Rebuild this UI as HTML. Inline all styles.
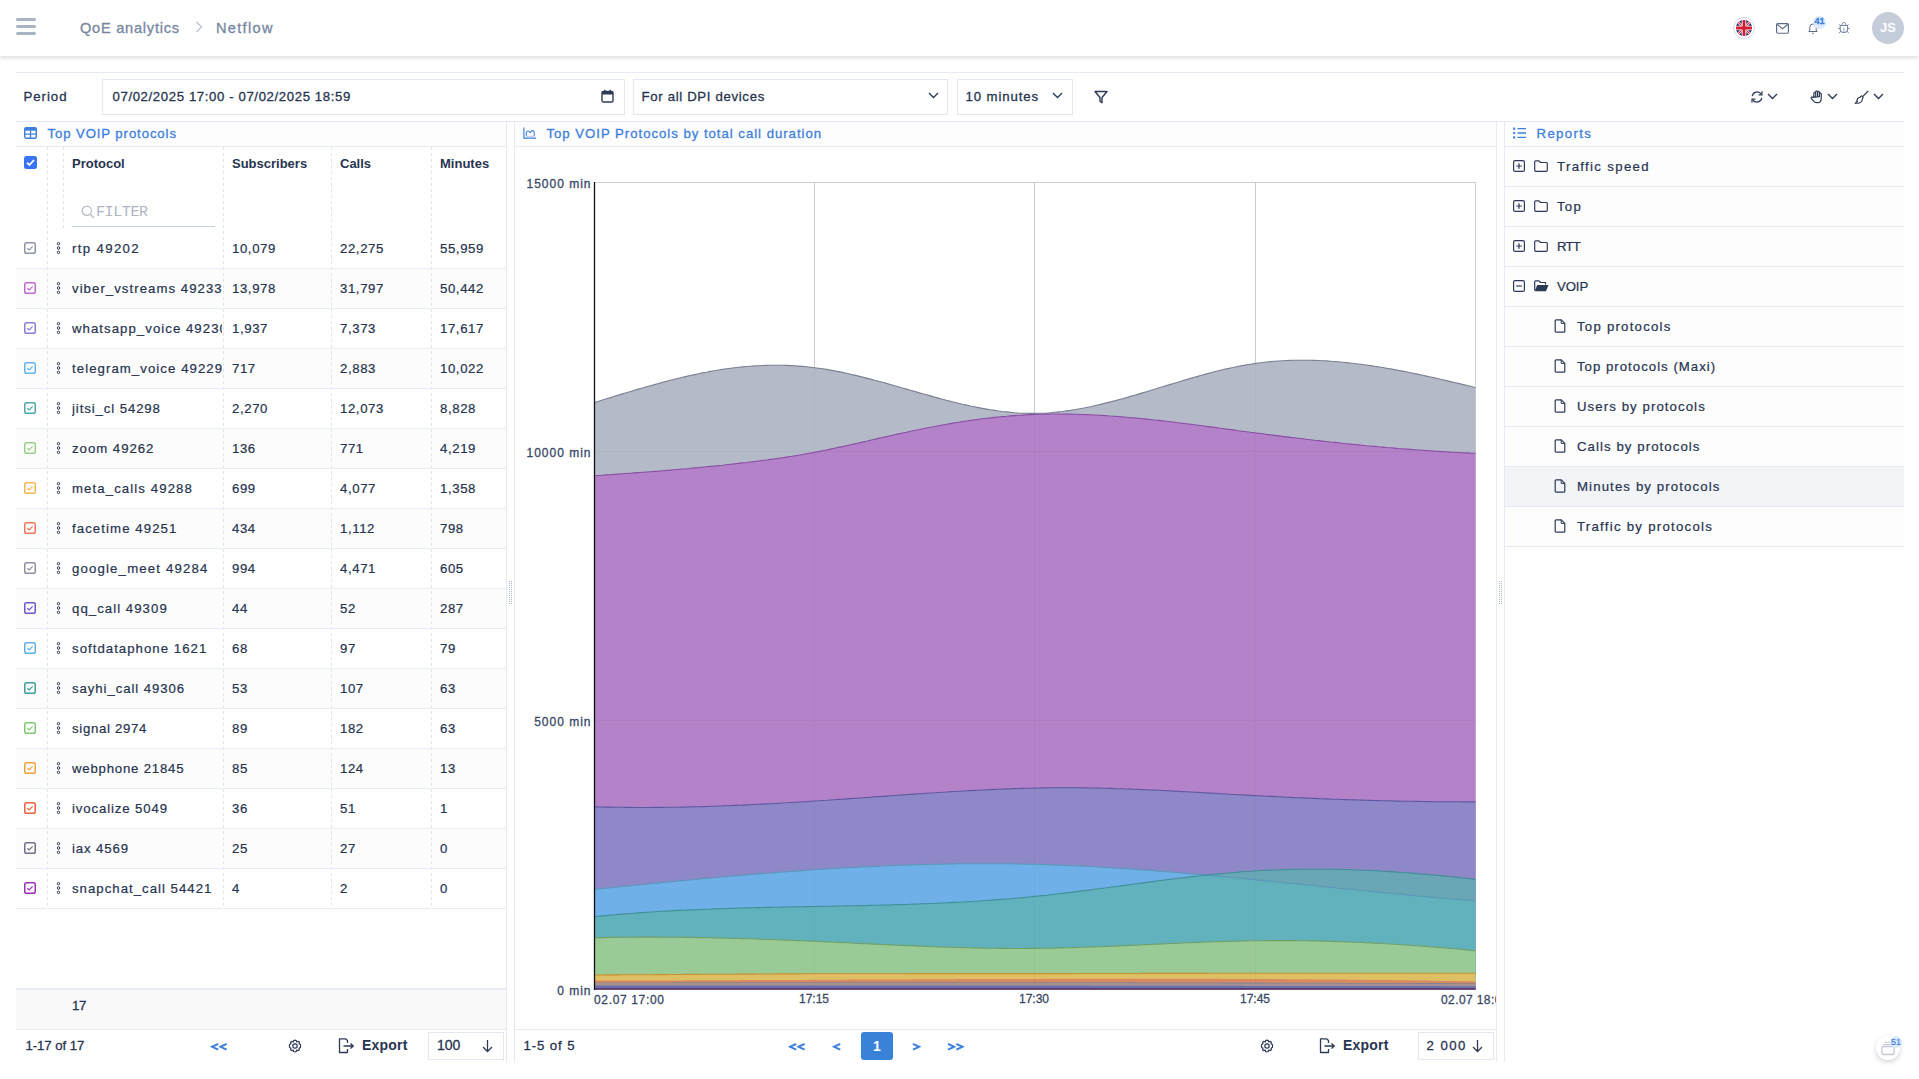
<!DOCTYPE html>
<html><head><meta charset="utf-8">
<style>
*{box-sizing:border-box;margin:0;padding:0}
html,body{width:1919px;height:1079px;overflow:hidden;background:#fff;font-family:"Liberation Sans",sans-serif;color:#27344f}
.a{position:absolute}
.t{position:absolute;white-space:nowrap;line-height:16px;-webkit-text-stroke:0.3px currentColor}
.hl{position:absolute;height:1px;background:#e6ebf3}
.vl{position:absolute;width:1px;background:#e6ebf3}
.dv{position:absolute;z-index:1;width:1px;background:repeating-linear-gradient(to bottom,#dfe5ef 0 3px,transparent 3px 6px)}
svg{position:absolute;overflow:visible}
</style></head><body>
<!-- HEADER -->
<div class="a" style="left:0;top:0;width:1919px;height:56px;background:#fff;box-shadow:0 2px 4px rgba(40,50,70,.16);z-index:2"></div>
<div class="a" style="z-index:3;left:0;top:0;width:1919px;height:56px">
  <div class="a" style="left:16px;top:18px;width:20px;height:2.5px;border-radius:2px;background:#aab3c3"></div>
  <div class="a" style="left:16px;top:25px;width:20px;height:2.5px;border-radius:2px;background:#aab3c3"></div>
  <div class="a" style="left:16px;top:32px;width:20px;height:2.5px;border-radius:2px;background:#aab3c3"></div>
  <div class="t" style="left:80px;top:20px;font-size:14.6px;color:#7886a1;letter-spacing:0.75px">QoE analytics</div>
  <svg style="left:195px;top:21px" width="8" height="12"><path d="M1.5 1 L6.5 6 L1.5 11" fill="none" stroke="#b9c1cf" stroke-width="1.3"/></svg>
  <div class="t" style="left:216px;top:20px;font-size:14.6px;color:#7886a1;letter-spacing:1.3px">Netflow</div>
  <!-- flag -->
  <div class="a" style="left:1733px;top:17px;width:22px;height:22px;border-radius:50%;border:1px solid #d3d9e4;background:#fff"></div>
  <svg style="left:1736px;top:20px" width="16" height="16" viewBox="0 0 16 16">
    <defs><clipPath id="fc"><circle cx="8" cy="8" r="8"/></clipPath></defs>
    <g clip-path="url(#fc)">
      <rect width="16" height="16" fill="#1d2670"/>
      <path d="M0 0L16 16M16 0L0 16" stroke="#fff" stroke-width="2.6"/>
      <path d="M0 0L16 16M16 0L0 16" stroke="#d21c2c" stroke-width="1.2"/>
      <path d="M8 0V16M0 8H16" stroke="#fff" stroke-width="4.6"/>
      <path d="M8 0V16M0 8H16" stroke="#d21c2c" stroke-width="2.8"/>
    </g>
  </svg>
  <!-- mail -->
  <svg style="left:1775.5px;top:22.5px" width="13" height="11" viewBox="0 0 13 11"><rect x="0.6" y="0.6" width="11.8" height="9.6" rx="1.2" fill="none" stroke="#5d6985" stroke-width="1.15"/><path d="M1 1.3L6.5 5.8L12 1.3" fill="none" stroke="#5d6985" stroke-width="1.15"/></svg>
  <!-- bell -->
  <svg style="left:1808px;top:22px" width="10" height="12" viewBox="0 0 10 12"><path d="M1.8 8.5V5.2A3.2 3.2 0 0 1 8.2 5.2V8.5L9.3 9.5H0.7Z" fill="none" stroke="#5d6985" stroke-width="1" stroke-linejoin="round"/><path d="M4.2 11.3H5.8" stroke="#5d6985" stroke-width="1"/></svg>
  <div class="a" style="left:1813px;top:16px;width:13px;height:13px;border-radius:50%;background:#dbeafe"></div>
  <div class="t" style="left:1813px;top:15px;width:13px;text-align:center;font-size:9px;line-height:13px;color:#3b7ddd;font-weight:bold">41</div>
  <!-- bug -->
  <svg style="left:1837px;top:21px" width="14" height="14" viewBox="0 0 14 14"><path d="M4.9 4.3C4.9 2.6 5.8 1.4 6.9 1.4S8.9 2.6 8.9 4.3" fill="none" stroke="#76839f" stroke-width="1"/><path d="M3.2 4.4H10.6V8C10.6 10.2 9 11.5 6.9 11.5S3.2 10.2 3.2 8Z" fill="none" stroke="#76839f" stroke-width="1.05" stroke-linejoin="round"/><path d="M6.9 6.5V11" stroke="#a9b2c4" stroke-width="1.1"/><path d="M1.2 7.6H3.2M10.6 7.6H12.6M2.4 3.4L3.3 4.4M11.4 3.4L10.5 4.4M3.5 10.4L2.1 12.2M10.3 10.4L11.7 12.2" fill="none" stroke="#76839f" stroke-width="1"/></svg>
  <!-- avatar -->
  <div class="a" style="left:1872px;top:12px;width:32px;height:32px;border-radius:50%;background:#c5ccda"></div>
  <div class="t" style="left:1872px;top:20px;width:32px;text-align:center;font-size:13px;font-weight:bold;-webkit-text-stroke:0;color:#fff">JS</div>
</div>
<!-- TOOLBAR -->
<div class="hl" style="left:16px;top:72px;width:1888px"></div>
<div class="hl" style="left:16px;top:121px;width:1888px"></div>
<div class="t" style="left:23.5px;top:88.7px;font-size:13.2px;letter-spacing:0.98px;color:#27344f">Period</div>
<div class="a" style="left:102px;top:79px;width:523px;height:36px;border:1px solid #e3e8f0;background:#fff"></div>
<div class="t" style="left:112.5px;top:88.7px;font-size:13.2px;letter-spacing:0.61px;color:#27344f">07/02/2025 17:00 - 07/02/2025 18:59</div>
<svg style="left:601px;top:89px" width="13" height="14" viewBox="0 0 13 14"><rect x="1" y="2.5" width="11" height="10.5" rx="1.3" fill="none" stroke="#2d3a55" stroke-width="1.4"/><rect x="1" y="2.5" width="11" height="3" fill="#2d3a55"/><path d="M3.8 0.8V3M9.2 0.8V3" stroke="#2d3a55" stroke-width="1.4"/></svg>
<div class="a" style="left:633px;top:79px;width:315px;height:36px;border:1px solid #e3e8f0;background:#fff"></div>
<div class="t" style="left:641.5px;top:88.7px;font-size:13.2px;letter-spacing:0.67px;color:#27344f">For all DPI devices</div>
<svg style="left:928px;top:92px" width="11" height="7" viewBox="0 0 11 7"><path d="M1 1L5.5 5.5L10 1" fill="none" stroke="#2d3a55" stroke-width="1.4"/></svg>
<div class="a" style="left:957px;top:79px;width:116px;height:36px;border:1px solid #e3e8f0;background:#fff"></div>
<div class="t" style="left:965.5px;top:88.7px;font-size:13.2px;letter-spacing:0.89px;color:#27344f">10 minutes</div>
<svg style="left:1052px;top:92px" width="11" height="7" viewBox="0 0 11 7"><path d="M1 1L5.5 5.5L10 1" fill="none" stroke="#2d3a55" stroke-width="1.4"/></svg>
<svg style="left:1094px;top:90px" width="14" height="14" viewBox="0 0 14 14"><path d="M1 1.5H13L8 7.5V12.8L6 11.2V7.5Z" fill="none" stroke="#2d3a55" stroke-width="1.4" stroke-linejoin="round"/></svg>
<!-- right toolbar icons -->
<svg style="left:1750px;top:90px" width="14" height="14" viewBox="0 0 14 14"><path d="M2.2 6.2A5 5 0 0 1 11.3 4.2M11.8 7.8A5 5 0 0 1 2.7 9.8" fill="none" stroke="#2d3a55" stroke-width="1.2"/><path d="M12 1.3V4.8H8.6M2 12.7V9.2H5.4" fill="none" stroke="#2d3a55" stroke-width="1.2"/></svg>
<svg style="left:1767px;top:93px" width="11" height="7" viewBox="0 0 11 7"><path d="M1 1L5.5 5.5L10 1" fill="none" stroke="#2d3a55" stroke-width="1.4"/></svg>
<svg style="left:1809.5px;top:90.3px" width="13.8" height="13.8" viewBox="0 0 15 15"><path d="M4.2 8V3.5A1 1 0 0 1 6.2 3.5V7M6.2 7V2A1 1 0 0 1 8.2 2V7M8.2 7V2.6A1 1 0 0 1 10.2 2.6V7.3M10.2 7.3V4.2A1 1 0 0 1 12.2 4.2V9.5C12.2 12 10.5 13.8 8 13.8H7.2C5.6 13.8 4.6 13 3.6 11.8L1.4 9.2A1 1 0 0 1 3 8Z" fill="none" stroke="#2d3a55" stroke-width="1.3" stroke-linejoin="round"/></svg>
<svg style="left:1827px;top:93px" width="11" height="7" viewBox="0 0 11 7"><path d="M1 1L5.5 5.5L10 1" fill="none" stroke="#2d3a55" stroke-width="1.4"/></svg>
<svg style="left:1854px;top:90px" width="15" height="15" viewBox="0 0 15 15"><path d="M14.2 1L8.6 6.6" stroke="#2d3a55" stroke-width="1.2"/><path d="M7.6 5.8L9.2 7.4L8.6 8.2C8.3 10.8 6.5 13.2 3.5 13.3H1.2L2.6 11.7L3.6 11.8L2.9 10.6C2.9 9 4.3 7.6 6 7.2Z" fill="none" stroke="#2d3a55" stroke-width="1.15" stroke-linejoin="round"/><path d="M1.5 13.2H3.6" stroke="#7d8699" stroke-width="1"/></svg>
<svg style="left:1873px;top:93px" width="11" height="7" viewBox="0 0 11 7"><path d="M1 1L5.5 5.5L10 1" fill="none" stroke="#2d3a55" stroke-width="1.4"/></svg>

<!-- LEFT PANEL -->
<div class="a" style="left:16px;top:122px;width:490px;height:24px;background:#fdfdfe"></div>
<svg style="left:24px;top:127px" width="13" height="12" viewBox="0 0 13 12"><rect x="0.7" y="0.7" width="11.6" height="10.6" rx="1.5" fill="none" stroke="#3f7fdc" stroke-width="1.4"/><rect x="0.7" y="0.7" width="11.6" height="3" fill="#3f7fdc"/><path d="M0.7 7.2H12.3M6.5 3.5V11.3" stroke="#3f7fdc" stroke-width="1.3"/></svg>
<div class="t" style="left:47.5px;top:125.5px;font-size:13.2px;letter-spacing:0.89px;color:#3d7fdb">Top VOIP protocols</div>
<div class="hl" style="left:16px;top:146px;width:490px"></div>
<div class="vl" style="left:506px;top:122px;height:940px"></div>
<!-- header row -->
<div class="a" style="left:24px;top:156px;width:13px;height:13px;border-radius:2.5px;background:#3b73f5"></div>
<svg style="left:24px;top:156px" width="13" height="13" viewBox="0 0 13 13"><path d="M3 6.6L5.4 9L10 4" fill="none" stroke="#fff" stroke-width="1.8"/></svg>
<div class="dv" style="left:47px;top:147px;height:762px"></div>
<div class="dv" style="left:63px;top:147px;height:81px"></div>
<div class="dv" style="left:223px;top:147px;height:762px"></div>
<div class="dv" style="left:331px;top:147px;height:762px"></div>
<div class="dv" style="left:431px;top:147px;height:762px"></div>
<div class="t" style="left:72px;top:156px;font-size:13px;font-weight:bold;-webkit-text-stroke:0;color:#27344f">Protocol</div>
<div class="t" style="left:232px;top:156px;font-size:13px;font-weight:bold;-webkit-text-stroke:0;color:#27344f">Subscribers</div>
<div class="t" style="left:340px;top:156px;font-size:13px;font-weight:bold;-webkit-text-stroke:0;color:#27344f">Calls</div>
<div class="t" style="left:440px;top:156px;font-size:13px;font-weight:bold;-webkit-text-stroke:0;color:#27344f">Minutes</div>
<svg style="left:81px;top:205px" width="14" height="14" viewBox="0 0 14 14"><circle cx="5.8" cy="5.8" r="4.6" fill="none" stroke="#b6bdca" stroke-width="1.3"/><path d="M9.2 9.2L12.8 12.8" stroke="#b6bdca" stroke-width="1.4"/></svg>
<div class="t" style="left:96px;top:205px;font-size:15px;color:#aeb6c3;font-family:'Liberation Mono',monospace;letter-spacing:-0.4px;-webkit-text-stroke:0">FILTER</div>
<div class="a" style="left:72px;top:226px;width:143px;height:1px;background:#c7d2e2"></div>

<div class="a" style="left:16px;top:229px;width:490px;height:40px;background:#fff;border-bottom:1px solid #e8ecf3"></div>
<svg style="left:24px;top:242px" width="12" height="12" viewBox="0 0 12 12"><rect x="0.75" y="0.75" width="10.5" height="10.5" rx="1.8" fill="none" stroke="#8e95a5" stroke-width="1.5"/><path d="M3.3 6.2L5.2 7.9L8.6 4.3" fill="none" stroke="#8e95a5" stroke-width="1.2"/></svg>
<svg style="left:56px;top:242px" width="5" height="12" viewBox="0 0 5 12"><circle cx="2.5" cy="1.7" r="1.2" fill="none" stroke="#2d3a55" stroke-width="1"/><circle cx="2.5" cy="6" r="1.2" fill="none" stroke="#2d3a55" stroke-width="1"/><circle cx="2.5" cy="10.3" r="1.2" fill="none" stroke="#2d3a55" stroke-width="1"/></svg>
<div class="a" style="left:72px;top:241px;width:150px;height:18px;overflow:hidden"><div class="t" style="left:0;top:0;font-size:13.2px;letter-spacing:1.36px;-webkit-text-stroke:0.22px">rtp 49202</div></div>
<div class="t" style="left:232px;top:241px;font-size:13.2px;letter-spacing:0.6px;-webkit-text-stroke:0.22px">10,079</div>
<div class="t" style="left:340px;top:241px;font-size:13.2px;letter-spacing:0.6px;-webkit-text-stroke:0.22px">22,275</div>
<div class="t" style="left:440px;top:241px;font-size:13.2px;letter-spacing:0.6px;-webkit-text-stroke:0.22px">55,959</div>
<div class="a" style="left:16px;top:269px;width:490px;height:40px;background:#fcfcfd;border-bottom:1px solid #e8ecf3"></div>
<svg style="left:24px;top:282px" width="12" height="12" viewBox="0 0 12 12"><rect x="0.75" y="0.75" width="10.5" height="10.5" rx="1.8" fill="none" stroke="#c06ad2" stroke-width="1.5"/><path d="M3.3 6.2L5.2 7.9L8.6 4.3" fill="none" stroke="#c06ad2" stroke-width="1.2"/></svg>
<svg style="left:56px;top:282px" width="5" height="12" viewBox="0 0 5 12"><circle cx="2.5" cy="1.7" r="1.2" fill="none" stroke="#2d3a55" stroke-width="1"/><circle cx="2.5" cy="6" r="1.2" fill="none" stroke="#2d3a55" stroke-width="1"/><circle cx="2.5" cy="10.3" r="1.2" fill="none" stroke="#2d3a55" stroke-width="1"/></svg>
<div class="a" style="left:72px;top:281px;width:150px;height:18px;overflow:hidden"><div class="t" style="left:0;top:0;font-size:13.2px;letter-spacing:1.05px;-webkit-text-stroke:0.22px">viber_vstreams 49233</div></div>
<div class="t" style="left:232px;top:281px;font-size:13.2px;letter-spacing:0.6px;-webkit-text-stroke:0.22px">13,978</div>
<div class="t" style="left:340px;top:281px;font-size:13.2px;letter-spacing:0.6px;-webkit-text-stroke:0.22px">31,797</div>
<div class="t" style="left:440px;top:281px;font-size:13.2px;letter-spacing:0.6px;-webkit-text-stroke:0.22px">50,442</div>
<div class="a" style="left:16px;top:309px;width:490px;height:40px;background:#fff;border-bottom:1px solid #e8ecf3"></div>
<svg style="left:24px;top:322px" width="12" height="12" viewBox="0 0 12 12"><rect x="0.75" y="0.75" width="10.5" height="10.5" rx="1.8" fill="none" stroke="#8a7fd6" stroke-width="1.5"/><path d="M3.3 6.2L5.2 7.9L8.6 4.3" fill="none" stroke="#8a7fd6" stroke-width="1.2"/></svg>
<svg style="left:56px;top:322px" width="5" height="12" viewBox="0 0 5 12"><circle cx="2.5" cy="1.7" r="1.2" fill="none" stroke="#2d3a55" stroke-width="1"/><circle cx="2.5" cy="6" r="1.2" fill="none" stroke="#2d3a55" stroke-width="1"/><circle cx="2.5" cy="10.3" r="1.2" fill="none" stroke="#2d3a55" stroke-width="1"/></svg>
<div class="a" style="left:72px;top:321px;width:150px;height:18px;overflow:hidden"><div class="t" style="left:0;top:0;font-size:13.2px;letter-spacing:1.05px;-webkit-text-stroke:0.22px">whatsapp_voice 49230</div></div>
<div class="t" style="left:232px;top:321px;font-size:13.2px;letter-spacing:0.6px;-webkit-text-stroke:0.22px">1,937</div>
<div class="t" style="left:340px;top:321px;font-size:13.2px;letter-spacing:0.6px;-webkit-text-stroke:0.22px">7,373</div>
<div class="t" style="left:440px;top:321px;font-size:13.2px;letter-spacing:0.6px;-webkit-text-stroke:0.22px">17,617</div>
<div class="a" style="left:16px;top:349px;width:490px;height:40px;background:#fcfcfd;border-bottom:1px solid #e8ecf3"></div>
<svg style="left:24px;top:362px" width="12" height="12" viewBox="0 0 12 12"><rect x="0.75" y="0.75" width="10.5" height="10.5" rx="1.8" fill="none" stroke="#62b4f0" stroke-width="1.5"/><path d="M3.3 6.2L5.2 7.9L8.6 4.3" fill="none" stroke="#62b4f0" stroke-width="1.2"/></svg>
<svg style="left:56px;top:362px" width="5" height="12" viewBox="0 0 5 12"><circle cx="2.5" cy="1.7" r="1.2" fill="none" stroke="#2d3a55" stroke-width="1"/><circle cx="2.5" cy="6" r="1.2" fill="none" stroke="#2d3a55" stroke-width="1"/><circle cx="2.5" cy="10.3" r="1.2" fill="none" stroke="#2d3a55" stroke-width="1"/></svg>
<div class="a" style="left:72px;top:361px;width:150px;height:18px;overflow:hidden"><div class="t" style="left:0;top:0;font-size:13.2px;letter-spacing:1.07px;-webkit-text-stroke:0.22px">telegram_voice 49229</div></div>
<div class="t" style="left:232px;top:361px;font-size:13.2px;letter-spacing:0.6px;-webkit-text-stroke:0.22px">717</div>
<div class="t" style="left:340px;top:361px;font-size:13.2px;letter-spacing:0.6px;-webkit-text-stroke:0.22px">2,883</div>
<div class="t" style="left:440px;top:361px;font-size:13.2px;letter-spacing:0.6px;-webkit-text-stroke:0.22px">10,022</div>
<div class="a" style="left:16px;top:389px;width:490px;height:40px;background:#fff;border-bottom:1px solid #e8ecf3"></div>
<svg style="left:24px;top:402px" width="12" height="12" viewBox="0 0 12 12"><rect x="0.75" y="0.75" width="10.5" height="10.5" rx="1.8" fill="none" stroke="#4fa9a6" stroke-width="1.5"/><path d="M3.3 6.2L5.2 7.9L8.6 4.3" fill="none" stroke="#4fa9a6" stroke-width="1.2"/></svg>
<svg style="left:56px;top:402px" width="5" height="12" viewBox="0 0 5 12"><circle cx="2.5" cy="1.7" r="1.2" fill="none" stroke="#2d3a55" stroke-width="1"/><circle cx="2.5" cy="6" r="1.2" fill="none" stroke="#2d3a55" stroke-width="1"/><circle cx="2.5" cy="10.3" r="1.2" fill="none" stroke="#2d3a55" stroke-width="1"/></svg>
<div class="a" style="left:72px;top:401px;width:150px;height:18px;overflow:hidden"><div class="t" style="left:0;top:0;font-size:13.2px;letter-spacing:0.9px;-webkit-text-stroke:0.22px">jitsi_cl 54298</div></div>
<div class="t" style="left:232px;top:401px;font-size:13.2px;letter-spacing:0.6px;-webkit-text-stroke:0.22px">2,270</div>
<div class="t" style="left:340px;top:401px;font-size:13.2px;letter-spacing:0.6px;-webkit-text-stroke:0.22px">12,073</div>
<div class="t" style="left:440px;top:401px;font-size:13.2px;letter-spacing:0.6px;-webkit-text-stroke:0.22px">8,828</div>
<div class="a" style="left:16px;top:429px;width:490px;height:40px;background:#fcfcfd;border-bottom:1px solid #e8ecf3"></div>
<svg style="left:24px;top:442px" width="12" height="12" viewBox="0 0 12 12"><rect x="0.75" y="0.75" width="10.5" height="10.5" rx="1.8" fill="none" stroke="#98d08a" stroke-width="1.5"/><path d="M3.3 6.2L5.2 7.9L8.6 4.3" fill="none" stroke="#98d08a" stroke-width="1.2"/></svg>
<svg style="left:56px;top:442px" width="5" height="12" viewBox="0 0 5 12"><circle cx="2.5" cy="1.7" r="1.2" fill="none" stroke="#2d3a55" stroke-width="1"/><circle cx="2.5" cy="6" r="1.2" fill="none" stroke="#2d3a55" stroke-width="1"/><circle cx="2.5" cy="10.3" r="1.2" fill="none" stroke="#2d3a55" stroke-width="1"/></svg>
<div class="a" style="left:72px;top:441px;width:150px;height:18px;overflow:hidden"><div class="t" style="left:0;top:0;font-size:13.2px;letter-spacing:0.98px;-webkit-text-stroke:0.22px">zoom 49262</div></div>
<div class="t" style="left:232px;top:441px;font-size:13.2px;letter-spacing:0.6px;-webkit-text-stroke:0.22px">136</div>
<div class="t" style="left:340px;top:441px;font-size:13.2px;letter-spacing:0.6px;-webkit-text-stroke:0.22px">771</div>
<div class="t" style="left:440px;top:441px;font-size:13.2px;letter-spacing:0.6px;-webkit-text-stroke:0.22px">4,219</div>
<div class="a" style="left:16px;top:469px;width:490px;height:40px;background:#fff;border-bottom:1px solid #e8ecf3"></div>
<svg style="left:24px;top:482px" width="12" height="12" viewBox="0 0 12 12"><rect x="0.75" y="0.75" width="10.5" height="10.5" rx="1.8" fill="none" stroke="#f5b654" stroke-width="1.5"/><path d="M3.3 6.2L5.2 7.9L8.6 4.3" fill="none" stroke="#f5b654" stroke-width="1.2"/></svg>
<svg style="left:56px;top:482px" width="5" height="12" viewBox="0 0 5 12"><circle cx="2.5" cy="1.7" r="1.2" fill="none" stroke="#2d3a55" stroke-width="1"/><circle cx="2.5" cy="6" r="1.2" fill="none" stroke="#2d3a55" stroke-width="1"/><circle cx="2.5" cy="10.3" r="1.2" fill="none" stroke="#2d3a55" stroke-width="1"/></svg>
<div class="a" style="left:72px;top:481px;width:150px;height:18px;overflow:hidden"><div class="t" style="left:0;top:0;font-size:13.2px;letter-spacing:1.1px;-webkit-text-stroke:0.22px">meta_calls 49288</div></div>
<div class="t" style="left:232px;top:481px;font-size:13.2px;letter-spacing:0.6px;-webkit-text-stroke:0.22px">699</div>
<div class="t" style="left:340px;top:481px;font-size:13.2px;letter-spacing:0.6px;-webkit-text-stroke:0.22px">4,077</div>
<div class="t" style="left:440px;top:481px;font-size:13.2px;letter-spacing:0.6px;-webkit-text-stroke:0.22px">1,358</div>
<div class="a" style="left:16px;top:509px;width:490px;height:40px;background:#fcfcfd;border-bottom:1px solid #e8ecf3"></div>
<svg style="left:24px;top:522px" width="12" height="12" viewBox="0 0 12 12"><rect x="0.75" y="0.75" width="10.5" height="10.5" rx="1.8" fill="none" stroke="#f27757" stroke-width="1.5"/><path d="M3.3 6.2L5.2 7.9L8.6 4.3" fill="none" stroke="#f27757" stroke-width="1.2"/></svg>
<svg style="left:56px;top:522px" width="5" height="12" viewBox="0 0 5 12"><circle cx="2.5" cy="1.7" r="1.2" fill="none" stroke="#2d3a55" stroke-width="1"/><circle cx="2.5" cy="6" r="1.2" fill="none" stroke="#2d3a55" stroke-width="1"/><circle cx="2.5" cy="10.3" r="1.2" fill="none" stroke="#2d3a55" stroke-width="1"/></svg>
<div class="a" style="left:72px;top:521px;width:150px;height:18px;overflow:hidden"><div class="t" style="left:0;top:0;font-size:13.2px;letter-spacing:1.09px;-webkit-text-stroke:0.22px">facetime 49251</div></div>
<div class="t" style="left:232px;top:521px;font-size:13.2px;letter-spacing:0.6px;-webkit-text-stroke:0.22px">434</div>
<div class="t" style="left:340px;top:521px;font-size:13.2px;letter-spacing:0.6px;-webkit-text-stroke:0.22px">1,112</div>
<div class="t" style="left:440px;top:521px;font-size:13.2px;letter-spacing:0.6px;-webkit-text-stroke:0.22px">798</div>
<div class="a" style="left:16px;top:549px;width:490px;height:40px;background:#fff;border-bottom:1px solid #e8ecf3"></div>
<svg style="left:24px;top:562px" width="12" height="12" viewBox="0 0 12 12"><rect x="0.75" y="0.75" width="10.5" height="10.5" rx="1.8" fill="none" stroke="#8b91a0" stroke-width="1.5"/><path d="M3.3 6.2L5.2 7.9L8.6 4.3" fill="none" stroke="#8b91a0" stroke-width="1.2"/></svg>
<svg style="left:56px;top:562px" width="5" height="12" viewBox="0 0 5 12"><circle cx="2.5" cy="1.7" r="1.2" fill="none" stroke="#2d3a55" stroke-width="1"/><circle cx="2.5" cy="6" r="1.2" fill="none" stroke="#2d3a55" stroke-width="1"/><circle cx="2.5" cy="10.3" r="1.2" fill="none" stroke="#2d3a55" stroke-width="1"/></svg>
<div class="a" style="left:72px;top:561px;width:150px;height:18px;overflow:hidden"><div class="t" style="left:0;top:0;font-size:13.2px;letter-spacing:1.17px;-webkit-text-stroke:0.22px">google_meet 49284</div></div>
<div class="t" style="left:232px;top:561px;font-size:13.2px;letter-spacing:0.6px;-webkit-text-stroke:0.22px">994</div>
<div class="t" style="left:340px;top:561px;font-size:13.2px;letter-spacing:0.6px;-webkit-text-stroke:0.22px">4,471</div>
<div class="t" style="left:440px;top:561px;font-size:13.2px;letter-spacing:0.6px;-webkit-text-stroke:0.22px">605</div>
<div class="a" style="left:16px;top:589px;width:490px;height:40px;background:#fcfcfd;border-bottom:1px solid #e8ecf3"></div>
<svg style="left:24px;top:602px" width="12" height="12" viewBox="0 0 12 12"><rect x="0.75" y="0.75" width="10.5" height="10.5" rx="1.8" fill="none" stroke="#6f58c9" stroke-width="1.5"/><path d="M3.3 6.2L5.2 7.9L8.6 4.3" fill="none" stroke="#6f58c9" stroke-width="1.2"/></svg>
<svg style="left:56px;top:602px" width="5" height="12" viewBox="0 0 5 12"><circle cx="2.5" cy="1.7" r="1.2" fill="none" stroke="#2d3a55" stroke-width="1"/><circle cx="2.5" cy="6" r="1.2" fill="none" stroke="#2d3a55" stroke-width="1"/><circle cx="2.5" cy="10.3" r="1.2" fill="none" stroke="#2d3a55" stroke-width="1"/></svg>
<div class="a" style="left:72px;top:601px;width:150px;height:18px;overflow:hidden"><div class="t" style="left:0;top:0;font-size:13.2px;letter-spacing:1.05px;-webkit-text-stroke:0.22px">qq_call 49309</div></div>
<div class="t" style="left:232px;top:601px;font-size:13.2px;letter-spacing:0.6px;-webkit-text-stroke:0.22px">44</div>
<div class="t" style="left:340px;top:601px;font-size:13.2px;letter-spacing:0.6px;-webkit-text-stroke:0.22px">52</div>
<div class="t" style="left:440px;top:601px;font-size:13.2px;letter-spacing:0.6px;-webkit-text-stroke:0.22px">287</div>
<div class="a" style="left:16px;top:629px;width:490px;height:40px;background:#fff;border-bottom:1px solid #e8ecf3"></div>
<svg style="left:24px;top:642px" width="12" height="12" viewBox="0 0 12 12"><rect x="0.75" y="0.75" width="10.5" height="10.5" rx="1.8" fill="none" stroke="#5fb0e6" stroke-width="1.5"/><path d="M3.3 6.2L5.2 7.9L8.6 4.3" fill="none" stroke="#5fb0e6" stroke-width="1.2"/></svg>
<svg style="left:56px;top:642px" width="5" height="12" viewBox="0 0 5 12"><circle cx="2.5" cy="1.7" r="1.2" fill="none" stroke="#2d3a55" stroke-width="1"/><circle cx="2.5" cy="6" r="1.2" fill="none" stroke="#2d3a55" stroke-width="1"/><circle cx="2.5" cy="10.3" r="1.2" fill="none" stroke="#2d3a55" stroke-width="1"/></svg>
<div class="a" style="left:72px;top:641px;width:150px;height:18px;overflow:hidden"><div class="t" style="left:0;top:0;font-size:13.2px;letter-spacing:1.04px;-webkit-text-stroke:0.22px">softdataphone 1621</div></div>
<div class="t" style="left:232px;top:641px;font-size:13.2px;letter-spacing:0.6px;-webkit-text-stroke:0.22px">68</div>
<div class="t" style="left:340px;top:641px;font-size:13.2px;letter-spacing:0.6px;-webkit-text-stroke:0.22px">97</div>
<div class="t" style="left:440px;top:641px;font-size:13.2px;letter-spacing:0.6px;-webkit-text-stroke:0.22px">79</div>
<div class="a" style="left:16px;top:669px;width:490px;height:40px;background:#fcfcfd;border-bottom:1px solid #e8ecf3"></div>
<svg style="left:24px;top:682px" width="12" height="12" viewBox="0 0 12 12"><rect x="0.75" y="0.75" width="10.5" height="10.5" rx="1.8" fill="none" stroke="#3e9e99" stroke-width="1.5"/><path d="M3.3 6.2L5.2 7.9L8.6 4.3" fill="none" stroke="#3e9e99" stroke-width="1.2"/></svg>
<svg style="left:56px;top:682px" width="5" height="12" viewBox="0 0 5 12"><circle cx="2.5" cy="1.7" r="1.2" fill="none" stroke="#2d3a55" stroke-width="1"/><circle cx="2.5" cy="6" r="1.2" fill="none" stroke="#2d3a55" stroke-width="1"/><circle cx="2.5" cy="10.3" r="1.2" fill="none" stroke="#2d3a55" stroke-width="1"/></svg>
<div class="a" style="left:72px;top:681px;width:150px;height:18px;overflow:hidden"><div class="t" style="left:0;top:0;font-size:13.2px;letter-spacing:0.93px;-webkit-text-stroke:0.22px">sayhi_call 49306</div></div>
<div class="t" style="left:232px;top:681px;font-size:13.2px;letter-spacing:0.6px;-webkit-text-stroke:0.22px">53</div>
<div class="t" style="left:340px;top:681px;font-size:13.2px;letter-spacing:0.6px;-webkit-text-stroke:0.22px">107</div>
<div class="t" style="left:440px;top:681px;font-size:13.2px;letter-spacing:0.6px;-webkit-text-stroke:0.22px">63</div>
<div class="a" style="left:16px;top:709px;width:490px;height:40px;background:#fff;border-bottom:1px solid #e8ecf3"></div>
<svg style="left:24px;top:722px" width="12" height="12" viewBox="0 0 12 12"><rect x="0.75" y="0.75" width="10.5" height="10.5" rx="1.8" fill="none" stroke="#7fc874" stroke-width="1.5"/><path d="M3.3 6.2L5.2 7.9L8.6 4.3" fill="none" stroke="#7fc874" stroke-width="1.2"/></svg>
<svg style="left:56px;top:722px" width="5" height="12" viewBox="0 0 5 12"><circle cx="2.5" cy="1.7" r="1.2" fill="none" stroke="#2d3a55" stroke-width="1"/><circle cx="2.5" cy="6" r="1.2" fill="none" stroke="#2d3a55" stroke-width="1"/><circle cx="2.5" cy="10.3" r="1.2" fill="none" stroke="#2d3a55" stroke-width="1"/></svg>
<div class="a" style="left:72px;top:721px;width:150px;height:18px;overflow:hidden"><div class="t" style="left:0;top:0;font-size:13.2px;letter-spacing:0.69px;-webkit-text-stroke:0.22px">signal 2974</div></div>
<div class="t" style="left:232px;top:721px;font-size:13.2px;letter-spacing:0.6px;-webkit-text-stroke:0.22px">89</div>
<div class="t" style="left:340px;top:721px;font-size:13.2px;letter-spacing:0.6px;-webkit-text-stroke:0.22px">182</div>
<div class="t" style="left:440px;top:721px;font-size:13.2px;letter-spacing:0.6px;-webkit-text-stroke:0.22px">63</div>
<div class="a" style="left:16px;top:749px;width:490px;height:40px;background:#fcfcfd;border-bottom:1px solid #e8ecf3"></div>
<svg style="left:24px;top:762px" width="12" height="12" viewBox="0 0 12 12"><rect x="0.75" y="0.75" width="10.5" height="10.5" rx="1.8" fill="none" stroke="#f2a23c" stroke-width="1.5"/><path d="M3.3 6.2L5.2 7.9L8.6 4.3" fill="none" stroke="#f2a23c" stroke-width="1.2"/></svg>
<svg style="left:56px;top:762px" width="5" height="12" viewBox="0 0 5 12"><circle cx="2.5" cy="1.7" r="1.2" fill="none" stroke="#2d3a55" stroke-width="1"/><circle cx="2.5" cy="6" r="1.2" fill="none" stroke="#2d3a55" stroke-width="1"/><circle cx="2.5" cy="10.3" r="1.2" fill="none" stroke="#2d3a55" stroke-width="1"/></svg>
<div class="a" style="left:72px;top:761px;width:150px;height:18px;overflow:hidden"><div class="t" style="left:0;top:0;font-size:13.2px;letter-spacing:0.79px;-webkit-text-stroke:0.22px">webphone 21845</div></div>
<div class="t" style="left:232px;top:761px;font-size:13.2px;letter-spacing:0.6px;-webkit-text-stroke:0.22px">85</div>
<div class="t" style="left:340px;top:761px;font-size:13.2px;letter-spacing:0.6px;-webkit-text-stroke:0.22px">124</div>
<div class="t" style="left:440px;top:761px;font-size:13.2px;letter-spacing:0.6px;-webkit-text-stroke:0.22px">13</div>
<div class="a" style="left:16px;top:789px;width:490px;height:40px;background:#fff;border-bottom:1px solid #e8ecf3"></div>
<svg style="left:24px;top:802px" width="12" height="12" viewBox="0 0 12 12"><rect x="0.75" y="0.75" width="10.5" height="10.5" rx="1.8" fill="none" stroke="#ee6040" stroke-width="1.5"/><path d="M3.3 6.2L5.2 7.9L8.6 4.3" fill="none" stroke="#ee6040" stroke-width="1.2"/></svg>
<svg style="left:56px;top:802px" width="5" height="12" viewBox="0 0 5 12"><circle cx="2.5" cy="1.7" r="1.2" fill="none" stroke="#2d3a55" stroke-width="1"/><circle cx="2.5" cy="6" r="1.2" fill="none" stroke="#2d3a55" stroke-width="1"/><circle cx="2.5" cy="10.3" r="1.2" fill="none" stroke="#2d3a55" stroke-width="1"/></svg>
<div class="a" style="left:72px;top:801px;width:150px;height:18px;overflow:hidden"><div class="t" style="left:0;top:0;font-size:13.2px;letter-spacing:0.88px;-webkit-text-stroke:0.22px">ivocalize 5049</div></div>
<div class="t" style="left:232px;top:801px;font-size:13.2px;letter-spacing:0.6px;-webkit-text-stroke:0.22px">36</div>
<div class="t" style="left:340px;top:801px;font-size:13.2px;letter-spacing:0.6px;-webkit-text-stroke:0.22px">51</div>
<div class="t" style="left:440px;top:801px;font-size:13.2px;letter-spacing:0.6px;-webkit-text-stroke:0.22px">1</div>
<div class="a" style="left:16px;top:829px;width:490px;height:40px;background:#fcfcfd;border-bottom:1px solid #e8ecf3"></div>
<svg style="left:24px;top:842px" width="12" height="12" viewBox="0 0 12 12"><rect x="0.75" y="0.75" width="10.5" height="10.5" rx="1.8" fill="none" stroke="#6c7385" stroke-width="1.5"/><path d="M3.3 6.2L5.2 7.9L8.6 4.3" fill="none" stroke="#6c7385" stroke-width="1.2"/></svg>
<svg style="left:56px;top:842px" width="5" height="12" viewBox="0 0 5 12"><circle cx="2.5" cy="1.7" r="1.2" fill="none" stroke="#2d3a55" stroke-width="1"/><circle cx="2.5" cy="6" r="1.2" fill="none" stroke="#2d3a55" stroke-width="1"/><circle cx="2.5" cy="10.3" r="1.2" fill="none" stroke="#2d3a55" stroke-width="1"/></svg>
<div class="a" style="left:72px;top:841px;width:150px;height:18px;overflow:hidden"><div class="t" style="left:0;top:0;font-size:13.2px;letter-spacing:0.9px;-webkit-text-stroke:0.22px">iax 4569</div></div>
<div class="t" style="left:232px;top:841px;font-size:13.2px;letter-spacing:0.6px;-webkit-text-stroke:0.22px">25</div>
<div class="t" style="left:340px;top:841px;font-size:13.2px;letter-spacing:0.6px;-webkit-text-stroke:0.22px">27</div>
<div class="t" style="left:440px;top:841px;font-size:13.2px;letter-spacing:0.6px;-webkit-text-stroke:0.22px">0</div>
<div class="a" style="left:16px;top:869px;width:490px;height:40px;background:#fff;border-bottom:1px solid #e8ecf3"></div>
<svg style="left:24px;top:882px" width="12" height="12" viewBox="0 0 12 12"><rect x="0.75" y="0.75" width="10.5" height="10.5" rx="1.8" fill="none" stroke="#9b30b3" stroke-width="1.5"/><path d="M3.3 6.2L5.2 7.9L8.6 4.3" fill="none" stroke="#9b30b3" stroke-width="1.2"/></svg>
<svg style="left:56px;top:882px" width="5" height="12" viewBox="0 0 5 12"><circle cx="2.5" cy="1.7" r="1.2" fill="none" stroke="#2d3a55" stroke-width="1"/><circle cx="2.5" cy="6" r="1.2" fill="none" stroke="#2d3a55" stroke-width="1"/><circle cx="2.5" cy="10.3" r="1.2" fill="none" stroke="#2d3a55" stroke-width="1"/></svg>
<div class="a" style="left:72px;top:881px;width:150px;height:18px;overflow:hidden"><div class="t" style="left:0;top:0;font-size:13.2px;letter-spacing:1.02px;-webkit-text-stroke:0.22px">snapchat_call 54421</div></div>
<div class="t" style="left:232px;top:881px;font-size:13.2px;letter-spacing:0.6px;-webkit-text-stroke:0.22px">4</div>
<div class="t" style="left:340px;top:881px;font-size:13.2px;letter-spacing:0.6px;-webkit-text-stroke:0.22px">2</div>
<div class="t" style="left:440px;top:881px;font-size:13.2px;letter-spacing:0.6px;-webkit-text-stroke:0.22px">0</div>
<!-- footer -->
<div class="a" style="left:16px;top:988px;width:490px;height:42px;background:#f9f9fa;border-top:2px solid #e8edf5;border-bottom:1px solid #e6ebf3"></div>
<div class="t" style="left:72px;top:998px;font-size:13.2px;letter-spacing:-0.3px">17</div>
<div class="t" style="left:25.5px;top:1037.5px;font-size:13.2px;letter-spacing:-0.07px">1-17 of 17</div>
<svg style="left:210.5px;top:1043.3px" width="16.6" height="7.8"><path d="M7.2 0.9L1.1 3.8L7.2 6.7 M15.6 0.9L9.5 3.8L15.6 6.7" fill="none" stroke="#3d7fdb" stroke-width="2" stroke-linejoin="miter"/></svg>
<svg style="left:288px;top:1039px" width="14" height="14" viewBox="0 0 14 14"><path d="M7 1.2L8.3 1.5L8.8 3L10.3 2.4L11.4 3.3L11 4.8L12.4 5.6L12.6 7L12.4 8.4L11 9.2L11.4 10.7L10.3 11.6L8.8 11L8.3 12.5L7 12.8L5.7 12.5L5.2 11L3.7 11.6L2.6 10.7L3 9.2L1.6 8.4L1.4 7L1.6 5.6L3 4.8L2.6 3.3L3.7 2.4L5.2 3L5.7 1.5Z" fill="none" stroke="#2d3a55" stroke-width="1.2" stroke-linejoin="round"/><circle cx="7" cy="7" r="2.2" fill="none" stroke="#2d3a55" stroke-width="1.2"/></svg>
<svg style="left:338px;top:1038px" width="17" height="16" viewBox="0 0 17 16"><path d="M9.5 5V2.5L7.5 0.8H1.5V14.5H9.5V11" fill="none" stroke="#2d3a55" stroke-width="1.3" stroke-linejoin="round"/><path d="M5.5 8H15M12.5 5.5L15.2 8L12.5 10.5" fill="none" stroke="#2d3a55" stroke-width="1.3"/></svg>
<div class="t" style="left:362px;top:1037px;font-size:14px;font-weight:bold;-webkit-text-stroke:0;letter-spacing:0.2px">Export</div>
<div class="a" style="left:428px;top:1032px;width:76px;height:28px;border:1px solid #e3e8f0"></div>
<div class="t" style="left:437px;top:1037px;font-size:14px">100</div>
<svg style="left:482px;top:1039px" width="11" height="14" viewBox="0 0 11 14"><path d="M5.5 1V12.5M1 8L5.5 12.5L10 8" fill="none" stroke="#2d3a55" stroke-width="1.3"/></svg>

<!-- MIDDLE PANEL -->
<div class="vl" style="left:514px;top:122px;height:940px"></div>
<div class="vl" style="left:1496px;top:122px;height:940px"></div>
<div class="a" style="left:516px;top:122px;width:980px;height:24px;background:#fdfdfe"></div>
<div class="hl" style="left:515px;top:146px;width:981px"></div>
<svg style="left:523px;top:127px" width="14" height="12" viewBox="0 0 14 12"><path d="M0.9 0.5V11.2H13" fill="none" stroke="#3f7fdc" stroke-width="1.2"/><path d="M3.3 9.2V6.2C3.3 4.6 4.6 3.6 5.8 4.4L7.2 5.5L9 3.8C10.3 3.2 11.2 4.3 11.2 5.8V9.2" fill="none" stroke="#3f7fdc" stroke-width="1.1"/><rect x="3" y="8.6" width="8.6" height="1.4" fill="#c9d4ee"/></svg>
<div class="t" style="left:546.5px;top:125.5px;font-size:13.2px;letter-spacing:0.97px;color:#3d7fdb">Top VOIP Protocols by total call duration</div>
<!--CHART--><svg style="left:0;top:0;z-index:0" width="1919" height="1079" viewBox="0 0 1919 1079"><line x1="595" y1="182.5" x2="1476" y2="182.5" stroke="#d0d0d0" stroke-width="1"/><line x1="595" y1="451.5" x2="1476" y2="451.5" stroke="#d0d0d0" stroke-width="1"/><line x1="595" y1="720.5" x2="1476" y2="720.5" stroke="#d0d0d0" stroke-width="1"/><line x1="814.5" y1="182" x2="814.5" y2="989.6" stroke="#d0d0d0" stroke-width="1"/><line x1="1034.5" y1="182" x2="1034.5" y2="989.6" stroke="#d0d0d0" stroke-width="1"/><line x1="1255.5" y1="182" x2="1255.5" y2="989.6" stroke="#d0d0d0" stroke-width="1"/><line x1="1475.5" y1="182" x2="1475.5" y2="989.6" stroke="#d0d0d0" stroke-width="1"/><path d="M594.5,989.6 L594.5,402.5 598.5,401.3 602.5,400.0 606.5,398.8 610.5,397.6 614.5,396.3 618.5,395.1 622.5,393.9 626.5,392.7 630.5,391.5 634.5,390.3 638.5,389.1 642.5,388.0 646.5,386.8 650.5,385.7 654.5,384.6 658.5,383.5 662.5,382.4 666.5,381.3 670.5,380.3 674.5,379.3 678.5,378.3 682.5,377.3 686.5,376.4 690.5,375.5 694.5,374.6 698.5,373.8 702.5,372.9 706.5,372.2 710.5,371.4 714.5,370.7 718.5,370.0 722.5,369.4 726.5,368.8 730.5,368.3 734.5,367.8 738.5,367.3 742.5,366.9 746.5,366.5 750.5,366.2 754.5,365.9 758.5,365.7 762.5,365.5 766.5,365.4 770.5,365.3 774.5,365.2 778.5,365.3 782.5,365.3 786.5,365.4 790.5,365.6 794.5,365.8 798.5,366.1 802.5,366.4 806.5,366.8 810.5,367.2 814.5,367.7 818.5,368.2 822.5,368.8 826.5,369.4 830.5,370.1 834.5,370.9 838.5,371.6 842.5,372.4 846.5,373.3 850.5,374.2 854.5,375.1 858.5,376.1 862.5,377.1 866.5,378.1 870.5,379.1 874.5,380.2 878.5,381.2 882.5,382.3 886.5,383.4 890.5,384.6 894.5,385.7 898.5,386.8 902.5,388.0 906.5,389.1 910.5,390.3 914.5,391.4 918.5,392.6 922.5,393.7 926.5,394.8 930.5,395.9 934.5,397.1 938.5,398.1 942.5,399.2 946.5,400.3 950.5,401.3 954.5,402.3 958.5,403.3 962.5,404.2 966.5,405.1 970.5,406.0 974.5,406.8 978.5,407.6 982.5,408.4 986.5,409.1 990.5,409.8 994.5,410.4 998.5,411.0 1002.5,411.5 1006.5,411.9 1010.5,412.3 1014.5,412.7 1018.5,413.0 1022.5,413.2 1026.5,413.3 1030.5,413.4 1034.5,413.4 1038.5,413.3 1042.5,413.2 1046.5,413.0 1050.5,412.7 1054.5,412.3 1058.5,411.9 1062.5,411.5 1066.5,410.9 1070.5,410.4 1074.5,409.7 1078.5,409.0 1082.5,408.3 1086.5,407.5 1090.5,406.7 1094.5,405.8 1098.5,404.9 1102.5,403.9 1106.5,402.9 1110.5,401.9 1114.5,400.9 1118.5,399.8 1122.5,398.7 1126.5,397.6 1130.5,396.4 1134.5,395.3 1138.5,394.1 1142.5,392.9 1146.5,391.7 1150.5,390.5 1154.5,389.3 1158.5,388.0 1162.5,386.8 1166.5,385.6 1170.5,384.4 1174.5,383.2 1178.5,382.0 1182.5,380.8 1186.5,379.6 1190.5,378.4 1194.5,377.2 1198.5,376.1 1202.5,375.0 1206.5,373.9 1210.5,372.8 1214.5,371.8 1218.5,370.8 1222.5,369.8 1226.5,368.9 1230.5,368.0 1234.5,367.2 1238.5,366.3 1242.5,365.6 1246.5,364.9 1250.5,364.2 1254.5,363.6 1258.5,363.0 1262.5,362.5 1266.5,362.0 1270.5,361.6 1274.5,361.3 1278.5,361.0 1282.5,360.7 1286.5,360.5 1290.5,360.4 1294.5,360.3 1298.5,360.2 1302.5,360.2 1306.5,360.2 1310.5,360.3 1314.5,360.4 1318.5,360.5 1322.5,360.7 1326.5,360.9 1330.5,361.2 1334.5,361.5 1338.5,361.8 1342.5,362.2 1346.5,362.6 1350.5,363.0 1354.5,363.5 1358.5,364.0 1362.5,364.5 1366.5,365.0 1370.5,365.6 1374.5,366.2 1378.5,366.9 1382.5,367.5 1386.5,368.2 1390.5,368.9 1394.5,369.6 1398.5,370.4 1402.5,371.1 1406.5,371.9 1410.5,372.7 1414.5,373.6 1418.5,374.4 1422.5,375.2 1426.5,376.1 1430.5,377.0 1434.5,377.9 1438.5,378.8 1442.5,379.7 1446.5,380.6 1450.5,381.6 1454.5,382.5 1458.5,383.4 1462.5,384.4 1466.5,385.3 1470.5,386.3 1474.5,387.3 1475.5,387.5 L1475.5,989.6 Z" fill="#b4bac8"/><path d="M594.5,989.6 L594.5,475.8 598.5,475.5 602.5,475.2 606.5,474.9 610.5,474.7 614.5,474.4 618.5,474.1 622.5,473.8 626.5,473.5 630.5,473.2 634.5,472.9 638.5,472.6 642.5,472.3 646.5,472.0 650.5,471.7 654.5,471.4 658.5,471.1 662.5,470.7 666.5,470.4 670.5,470.1 674.5,469.7 678.5,469.4 682.5,469.0 686.5,468.7 690.5,468.3 694.5,467.9 698.5,467.6 702.5,467.2 706.5,466.8 710.5,466.4 714.5,466.0 718.5,465.6 722.5,465.2 726.5,464.7 730.5,464.3 734.5,463.9 738.5,463.4 742.5,462.9 746.5,462.5 750.5,462.0 754.5,461.5 758.5,461.0 762.5,460.5 766.5,460.0 770.5,459.4 774.5,458.9 778.5,458.3 782.5,457.7 786.5,457.1 790.5,456.5 794.5,455.9 798.5,455.2 802.5,454.5 806.5,453.8 810.5,453.1 814.5,452.3 818.5,451.6 822.5,450.8 826.5,450.0 830.5,449.1 834.5,448.3 838.5,447.4 842.5,446.6 846.5,445.7 850.5,444.8 854.5,443.9 858.5,443.0 862.5,442.1 866.5,441.2 870.5,440.2 874.5,439.3 878.5,438.4 882.5,437.5 886.5,436.6 890.5,435.7 894.5,434.8 898.5,433.9 902.5,433.0 906.5,432.2 910.5,431.3 914.5,430.5 918.5,429.7 922.5,428.8 926.5,428.0 930.5,427.2 934.5,426.5 938.5,425.7 942.5,425.0 946.5,424.3 950.5,423.6 954.5,422.9 958.5,422.3 962.5,421.6 966.5,421.0 970.5,420.4 974.5,419.9 978.5,419.3 982.5,418.8 986.5,418.3 990.5,417.9 994.5,417.4 998.5,417.0 1002.5,416.6 1006.5,416.3 1010.5,415.9 1014.5,415.6 1018.5,415.3 1022.5,415.1 1026.5,414.8 1030.5,414.6 1034.5,414.5 1038.5,414.3 1042.5,414.2 1046.5,414.1 1050.5,414.0 1054.5,414.0 1058.5,414.0 1062.5,414.0 1066.5,414.1 1070.5,414.1 1074.5,414.2 1078.5,414.3 1082.5,414.5 1086.5,414.6 1090.5,414.8 1094.5,415.0 1098.5,415.2 1102.5,415.4 1106.5,415.7 1110.5,416.0 1114.5,416.2 1118.5,416.6 1122.5,416.9 1126.5,417.2 1130.5,417.6 1134.5,417.9 1138.5,418.3 1142.5,418.7 1146.5,419.1 1150.5,419.5 1154.5,420.0 1158.5,420.4 1162.5,420.9 1166.5,421.3 1170.5,421.8 1174.5,422.3 1178.5,422.8 1182.5,423.3 1186.5,423.8 1190.5,424.3 1194.5,424.8 1198.5,425.3 1202.5,425.8 1206.5,426.4 1210.5,426.9 1214.5,427.4 1218.5,428.0 1222.5,428.5 1226.5,429.1 1230.5,429.6 1234.5,430.1 1238.5,430.7 1242.5,431.2 1246.5,431.7 1250.5,432.3 1254.5,432.8 1258.5,433.3 1262.5,433.8 1266.5,434.4 1270.5,434.9 1274.5,435.4 1278.5,435.9 1282.5,436.4 1286.5,436.9 1290.5,437.4 1294.5,437.8 1298.5,438.3 1302.5,438.8 1306.5,439.3 1310.5,439.7 1314.5,440.2 1318.5,440.6 1322.5,441.1 1326.5,441.5 1330.5,442.0 1334.5,442.4 1338.5,442.8 1342.5,443.3 1346.5,443.7 1350.5,444.1 1354.5,444.5 1358.5,444.9 1362.5,445.3 1366.5,445.7 1370.5,446.0 1374.5,446.4 1378.5,446.8 1382.5,447.1 1386.5,447.5 1390.5,447.8 1394.5,448.1 1398.5,448.5 1402.5,448.8 1406.5,449.1 1410.5,449.4 1414.5,449.7 1418.5,450.0 1422.5,450.3 1426.5,450.6 1430.5,450.8 1434.5,451.1 1438.5,451.3 1442.5,451.6 1446.5,451.8 1450.5,452.1 1454.5,452.3 1458.5,452.5 1462.5,452.7 1466.5,452.9 1470.5,453.1 1474.5,453.2 1475.5,453.3 L1475.5,989.6 Z" fill="#b482c8"/><path d="M594.5,989.6 L594.5,806.7 598.5,806.9 602.5,807.0 606.5,807.1 610.5,807.1 614.5,807.2 618.5,807.3 622.5,807.3 626.5,807.4 630.5,807.4 634.5,807.5 638.5,807.5 642.5,807.5 646.5,807.5 650.5,807.5 654.5,807.4 658.5,807.4 662.5,807.4 666.5,807.3 670.5,807.3 674.5,807.2 678.5,807.2 682.5,807.1 686.5,807.0 690.5,806.9 694.5,806.8 698.5,806.7 702.5,806.6 706.5,806.5 710.5,806.3 714.5,806.2 718.5,806.0 722.5,805.9 726.5,805.7 730.5,805.6 734.5,805.4 738.5,805.2 742.5,805.1 746.5,804.9 750.5,804.7 754.5,804.5 758.5,804.3 762.5,804.1 766.5,803.9 770.5,803.7 774.5,803.5 778.5,803.2 782.5,803.0 786.5,802.8 790.5,802.5 794.5,802.3 798.5,802.1 802.5,801.8 806.5,801.6 810.5,801.3 814.5,801.0 818.5,800.8 822.5,800.5 826.5,800.3 830.5,800.0 834.5,799.7 838.5,799.4 842.5,799.2 846.5,798.9 850.5,798.6 854.5,798.3 858.5,798.1 862.5,797.8 866.5,797.5 870.5,797.2 874.5,796.9 878.5,796.6 882.5,796.4 886.5,796.1 890.5,795.8 894.5,795.5 898.5,795.2 902.5,794.9 906.5,794.7 910.5,794.4 914.5,794.1 918.5,793.8 922.5,793.6 926.5,793.3 930.5,793.0 934.5,792.8 938.5,792.5 942.5,792.2 946.5,792.0 950.5,791.7 954.5,791.5 958.5,791.3 962.5,791.0 966.5,790.8 970.5,790.6 974.5,790.4 978.5,790.2 982.5,790.0 986.5,789.8 990.5,789.6 994.5,789.4 998.5,789.2 1002.5,789.1 1006.5,788.9 1010.5,788.8 1014.5,788.6 1018.5,788.5 1022.5,788.4 1026.5,788.3 1030.5,788.2 1034.5,788.1 1038.5,788.0 1042.5,787.9 1046.5,787.9 1050.5,787.8 1054.5,787.8 1058.5,787.8 1062.5,787.7 1066.5,787.7 1070.5,787.8 1074.5,787.8 1078.5,787.8 1082.5,787.9 1086.5,787.9 1090.5,788.0 1094.5,788.0 1098.5,788.1 1102.5,788.2 1106.5,788.3 1110.5,788.4 1114.5,788.6 1118.5,788.7 1122.5,788.8 1126.5,789.0 1130.5,789.1 1134.5,789.3 1138.5,789.4 1142.5,789.6 1146.5,789.8 1150.5,790.0 1154.5,790.1 1158.5,790.3 1162.5,790.5 1166.5,790.7 1170.5,790.9 1174.5,791.1 1178.5,791.3 1182.5,791.6 1186.5,791.8 1190.5,792.0 1194.5,792.2 1198.5,792.4 1202.5,792.7 1206.5,792.9 1210.5,793.1 1214.5,793.3 1218.5,793.6 1222.5,793.8 1226.5,794.0 1230.5,794.3 1234.5,794.5 1238.5,794.7 1242.5,794.9 1246.5,795.1 1250.5,795.4 1254.5,795.6 1258.5,795.8 1262.5,796.0 1266.5,796.2 1270.5,796.4 1274.5,796.6 1278.5,796.8 1282.5,797.0 1286.5,797.2 1290.5,797.4 1294.5,797.6 1298.5,797.7 1302.5,797.9 1306.5,798.1 1310.5,798.3 1314.5,798.4 1318.5,798.6 1322.5,798.7 1326.5,798.9 1330.5,799.1 1334.5,799.2 1338.5,799.3 1342.5,799.5 1346.5,799.6 1350.5,799.8 1354.5,799.9 1358.5,800.0 1362.5,800.1 1366.5,800.3 1370.5,800.4 1374.5,800.5 1378.5,800.6 1382.5,800.7 1386.5,800.8 1390.5,800.9 1394.5,801.0 1398.5,801.1 1402.5,801.2 1406.5,801.2 1410.5,801.3 1414.5,801.4 1418.5,801.4 1422.5,801.5 1426.5,801.6 1430.5,801.6 1434.5,801.7 1438.5,801.7 1442.5,801.7 1446.5,801.8 1450.5,801.8 1454.5,801.8 1458.5,801.8 1462.5,801.9 1466.5,801.9 1470.5,801.9 1474.5,801.9 1475.5,801.9 L1475.5,989.6 Z" fill="#8e88c8"/><path d="M594.5,989.6 L594.5,889.4 598.5,889.0 602.5,888.5 606.5,888.1 610.5,887.7 614.5,887.3 618.5,886.9 622.5,886.5 626.5,886.1 630.5,885.7 634.5,885.3 638.5,884.9 642.5,884.5 646.5,884.1 650.5,883.7 654.5,883.3 658.5,882.9 662.5,882.5 666.5,882.1 670.5,881.8 674.5,881.4 678.5,881.0 682.5,880.6 686.5,880.2 690.5,879.9 694.5,879.5 698.5,879.1 702.5,878.8 706.5,878.4 710.5,878.0 714.5,877.7 718.5,877.3 722.5,877.0 726.5,876.6 730.5,876.3 734.5,875.9 738.5,875.6 742.5,875.2 746.5,874.9 750.5,874.6 754.5,874.2 758.5,873.9 762.5,873.6 766.5,873.3 770.5,873.0 774.5,872.6 778.5,872.3 782.5,872.0 786.5,871.7 790.5,871.4 794.5,871.2 798.5,870.9 802.5,870.6 806.5,870.3 810.5,870.0 814.5,869.8 818.5,869.5 822.5,869.3 826.5,869.0 830.5,868.8 834.5,868.5 838.5,868.3 842.5,868.0 846.5,867.8 850.5,867.6 854.5,867.4 858.5,867.2 862.5,866.9 866.5,866.7 870.5,866.6 874.5,866.4 878.5,866.2 882.5,866.0 886.5,865.8 890.5,865.7 894.5,865.5 898.5,865.3 902.5,865.2 906.5,865.1 910.5,864.9 914.5,864.8 918.5,864.7 922.5,864.6 926.5,864.4 930.5,864.3 934.5,864.3 938.5,864.2 942.5,864.1 946.5,864.0 950.5,863.9 954.5,863.9 958.5,863.8 962.5,863.8 966.5,863.7 970.5,863.7 974.5,863.7 978.5,863.7 982.5,863.7 986.5,863.7 990.5,863.7 994.5,863.7 998.5,863.7 1002.5,863.7 1006.5,863.8 1010.5,863.8 1014.5,863.9 1018.5,864.0 1022.5,864.0 1026.5,864.1 1030.5,864.2 1034.5,864.3 1038.5,864.4 1042.5,864.5 1046.5,864.6 1050.5,864.8 1054.5,864.9 1058.5,865.1 1062.5,865.2 1066.5,865.4 1070.5,865.6 1074.5,865.7 1078.5,865.9 1082.5,866.1 1086.5,866.3 1090.5,866.5 1094.5,866.8 1098.5,867.0 1102.5,867.2 1106.5,867.4 1110.5,867.7 1114.5,867.9 1118.5,868.2 1122.5,868.5 1126.5,868.7 1130.5,869.0 1134.5,869.3 1138.5,869.6 1142.5,869.9 1146.5,870.1 1150.5,870.4 1154.5,870.8 1158.5,871.1 1162.5,871.4 1166.5,871.7 1170.5,872.0 1174.5,872.4 1178.5,872.7 1182.5,873.0 1186.5,873.4 1190.5,873.7 1194.5,874.1 1198.5,874.4 1202.5,874.8 1206.5,875.1 1210.5,875.5 1214.5,875.9 1218.5,876.2 1222.5,876.6 1226.5,877.0 1230.5,877.4 1234.5,877.8 1238.5,878.1 1242.5,878.5 1246.5,878.9 1250.5,879.3 1254.5,879.7 1258.5,880.1 1262.5,880.5 1266.5,880.9 1270.5,881.3 1274.5,881.7 1278.5,882.1 1282.5,882.5 1286.5,882.9 1290.5,883.3 1294.5,883.7 1298.5,884.1 1302.5,884.5 1306.5,884.9 1310.5,885.3 1314.5,885.8 1318.5,886.2 1322.5,886.6 1326.5,887.0 1330.5,887.4 1334.5,887.8 1338.5,888.2 1342.5,888.6 1346.5,889.0 1350.5,889.4 1354.5,889.8 1358.5,890.2 1362.5,890.6 1366.5,891.0 1370.5,891.4 1374.5,891.8 1378.5,892.2 1382.5,892.6 1386.5,893.0 1390.5,893.4 1394.5,893.7 1398.5,894.1 1402.5,894.5 1406.5,894.9 1410.5,895.2 1414.5,895.6 1418.5,896.0 1422.5,896.3 1426.5,896.7 1430.5,897.1 1434.5,897.4 1438.5,897.8 1442.5,898.1 1446.5,898.4 1450.5,898.8 1454.5,899.1 1458.5,899.4 1462.5,899.8 1466.5,900.1 1470.5,900.4 1474.5,900.7 1475.5,900.8 L1475.5,989.6 Z" fill="#70b0e8"/><path d="M594.5,989.6 L594.5,916.7 598.5,916.3 602.5,915.9 606.5,915.5 610.5,915.1 614.5,914.8 618.5,914.4 622.5,914.1 626.5,913.8 630.5,913.5 634.5,913.2 638.5,912.9 642.5,912.6 646.5,912.3 650.5,912.0 654.5,911.8 658.5,911.5 662.5,911.3 666.5,911.1 670.5,910.9 674.5,910.6 678.5,910.4 682.5,910.2 686.5,910.1 690.5,909.9 694.5,909.7 698.5,909.5 702.5,909.4 706.5,909.2 710.5,909.1 714.5,908.9 718.5,908.8 722.5,908.6 726.5,908.5 730.5,908.4 734.5,908.3 738.5,908.1 742.5,908.0 746.5,907.9 750.5,907.8 754.5,907.7 758.5,907.6 762.5,907.5 766.5,907.4 770.5,907.4 774.5,907.3 778.5,907.2 782.5,907.1 786.5,907.0 790.5,906.9 794.5,906.9 798.5,906.8 802.5,906.7 806.5,906.6 810.5,906.6 814.5,906.5 818.5,906.4 822.5,906.3 826.5,906.3 830.5,906.2 834.5,906.1 838.5,906.0 842.5,906.0 846.5,905.9 850.5,905.8 854.5,905.7 858.5,905.6 862.5,905.6 866.5,905.5 870.5,905.4 874.5,905.3 878.5,905.2 882.5,905.1 886.5,905.0 890.5,904.9 894.5,904.7 898.5,904.6 902.5,904.5 906.5,904.4 910.5,904.2 914.5,904.1 918.5,904.0 922.5,903.8 926.5,903.7 930.5,903.5 934.5,903.3 938.5,903.2 942.5,903.0 946.5,902.8 950.5,902.6 954.5,902.4 958.5,902.2 962.5,902.0 966.5,901.7 970.5,901.5 974.5,901.3 978.5,901.0 982.5,900.7 986.5,900.5 990.5,900.2 994.5,899.9 998.5,899.6 1002.5,899.3 1006.5,899.0 1010.5,898.7 1014.5,898.3 1018.5,898.0 1022.5,897.6 1026.5,897.2 1030.5,896.8 1034.5,896.4 1038.5,896.0 1042.5,895.6 1046.5,895.2 1050.5,894.7 1054.5,894.3 1058.5,893.8 1062.5,893.4 1066.5,892.9 1070.5,892.4 1074.5,891.9 1078.5,891.4 1082.5,890.9 1086.5,890.4 1090.5,889.9 1094.5,889.3 1098.5,888.8 1102.5,888.3 1106.5,887.8 1110.5,887.2 1114.5,886.7 1118.5,886.2 1122.5,885.6 1126.5,885.1 1130.5,884.5 1134.5,884.0 1138.5,883.5 1142.5,882.9 1146.5,882.4 1150.5,881.9 1154.5,881.4 1158.5,880.8 1162.5,880.3 1166.5,879.8 1170.5,879.3 1174.5,878.8 1178.5,878.3 1182.5,877.8 1186.5,877.4 1190.5,876.9 1194.5,876.4 1198.5,876.0 1202.5,875.5 1206.5,875.1 1210.5,874.7 1214.5,874.3 1218.5,873.9 1222.5,873.5 1226.5,873.2 1230.5,872.8 1234.5,872.5 1238.5,872.1 1242.5,871.8 1246.5,871.5 1250.5,871.3 1254.5,871.0 1258.5,870.8 1262.5,870.5 1266.5,870.3 1270.5,870.1 1274.5,870.0 1278.5,869.8 1282.5,869.7 1286.5,869.6 1290.5,869.5 1294.5,869.4 1298.5,869.3 1302.5,869.2 1306.5,869.2 1310.5,869.2 1314.5,869.2 1318.5,869.2 1322.5,869.2 1326.5,869.2 1330.5,869.3 1334.5,869.3 1338.5,869.4 1342.5,869.5 1346.5,869.6 1350.5,869.7 1354.5,869.9 1358.5,870.0 1362.5,870.2 1366.5,870.3 1370.5,870.5 1374.5,870.7 1378.5,870.9 1382.5,871.2 1386.5,871.4 1390.5,871.6 1394.5,871.9 1398.5,872.2 1402.5,872.5 1406.5,872.8 1410.5,873.1 1414.5,873.4 1418.5,873.7 1422.5,874.1 1426.5,874.4 1430.5,874.8 1434.5,875.1 1438.5,875.5 1442.5,875.9 1446.5,876.3 1450.5,876.7 1454.5,877.1 1458.5,877.6 1462.5,878.0 1466.5,878.4 1470.5,878.9 1474.5,879.4 1475.5,879.5 L1475.5,989.6 Z" fill="#62b2be"/><path d="M594.5,989.6 L594.5,937.7 598.5,937.6 602.5,937.6 606.5,937.5 610.5,937.4 614.5,937.4 618.5,937.3 622.5,937.3 626.5,937.2 630.5,937.2 634.5,937.2 638.5,937.1 642.5,937.1 646.5,937.1 650.5,937.1 654.5,937.1 658.5,937.1 662.5,937.2 666.5,937.2 670.5,937.2 674.5,937.2 678.5,937.3 682.5,937.3 686.5,937.4 690.5,937.4 694.5,937.5 698.5,937.6 702.5,937.6 706.5,937.7 710.5,937.8 714.5,937.9 718.5,938.0 722.5,938.1 726.5,938.2 730.5,938.3 734.5,938.4 738.5,938.5 742.5,938.6 746.5,938.7 750.5,938.8 754.5,939.0 758.5,939.1 762.5,939.2 766.5,939.4 770.5,939.5 774.5,939.7 778.5,939.8 782.5,940.0 786.5,940.1 790.5,940.3 794.5,940.5 798.5,940.6 802.5,940.8 806.5,941.0 810.5,941.1 814.5,941.3 818.5,941.5 822.5,941.7 826.5,941.9 830.5,942.0 834.5,942.2 838.5,942.4 842.5,942.6 846.5,942.8 850.5,943.0 854.5,943.2 858.5,943.4 862.5,943.6 866.5,943.7 870.5,943.9 874.5,944.1 878.5,944.3 882.5,944.5 886.5,944.7 890.5,944.9 894.5,945.1 898.5,945.2 902.5,945.4 906.5,945.6 910.5,945.8 914.5,945.9 918.5,946.1 922.5,946.3 926.5,946.4 930.5,946.6 934.5,946.7 938.5,946.9 942.5,947.0 946.5,947.1 950.5,947.3 954.5,947.4 958.5,947.5 962.5,947.6 966.5,947.7 970.5,947.8 974.5,947.9 978.5,948.0 982.5,948.1 986.5,948.2 990.5,948.2 994.5,948.3 998.5,948.4 1002.5,948.4 1006.5,948.4 1010.5,948.5 1014.5,948.5 1018.5,948.5 1022.5,948.5 1026.5,948.5 1030.5,948.4 1034.5,948.4 1038.5,948.4 1042.5,948.3 1046.5,948.3 1050.5,948.2 1054.5,948.1 1058.5,948.0 1062.5,947.9 1066.5,947.8 1070.5,947.7 1074.5,947.6 1078.5,947.5 1082.5,947.3 1086.5,947.2 1090.5,947.0 1094.5,946.9 1098.5,946.7 1102.5,946.6 1106.5,946.4 1110.5,946.3 1114.5,946.1 1118.5,945.9 1122.5,945.7 1126.5,945.6 1130.5,945.4 1134.5,945.2 1138.5,945.0 1142.5,944.8 1146.5,944.6 1150.5,944.5 1154.5,944.3 1158.5,944.1 1162.5,943.9 1166.5,943.7 1170.5,943.5 1174.5,943.4 1178.5,943.2 1182.5,943.0 1186.5,942.8 1190.5,942.7 1194.5,942.5 1198.5,942.4 1202.5,942.2 1206.5,942.0 1210.5,941.9 1214.5,941.8 1218.5,941.6 1222.5,941.5 1226.5,941.4 1230.5,941.3 1234.5,941.2 1238.5,941.1 1242.5,941.0 1246.5,940.9 1250.5,940.8 1254.5,940.8 1258.5,940.7 1262.5,940.7 1266.5,940.6 1270.5,940.6 1274.5,940.6 1278.5,940.6 1282.5,940.6 1286.5,940.6 1290.5,940.6 1294.5,940.6 1298.5,940.7 1302.5,940.7 1306.5,940.8 1310.5,940.9 1314.5,940.9 1318.5,941.0 1322.5,941.1 1326.5,941.2 1330.5,941.3 1334.5,941.4 1338.5,941.6 1342.5,941.7 1346.5,941.9 1350.5,942.0 1354.5,942.2 1358.5,942.3 1362.5,942.5 1366.5,942.7 1370.5,942.9 1374.5,943.1 1378.5,943.3 1382.5,943.5 1386.5,943.8 1390.5,944.0 1394.5,944.2 1398.5,944.5 1402.5,944.7 1406.5,945.0 1410.5,945.3 1414.5,945.6 1418.5,945.8 1422.5,946.1 1426.5,946.4 1430.5,946.8 1434.5,947.1 1438.5,947.4 1442.5,947.7 1446.5,948.1 1450.5,948.4 1454.5,948.8 1458.5,949.1 1462.5,949.5 1466.5,949.9 1470.5,950.3 1474.5,950.6 1475.5,950.7 L1475.5,989.6 Z" fill="#9aca96"/><path d="M594.5,989.6 L594.5,975.0 598.5,975.0 602.5,975.0 606.5,974.9 610.5,974.9 614.5,974.9 618.5,974.9 622.5,974.8 626.5,974.8 630.5,974.8 634.5,974.8 638.5,974.7 642.5,974.7 646.5,974.7 650.5,974.7 654.5,974.6 658.5,974.6 662.5,974.6 666.5,974.6 670.5,974.5 674.5,974.5 678.5,974.5 682.5,974.5 686.5,974.4 690.5,974.4 694.5,974.4 698.5,974.4 702.5,974.3 706.5,974.3 710.5,974.3 714.5,974.3 718.5,974.3 722.5,974.2 726.5,974.2 730.5,974.2 734.5,974.2 738.5,974.1 742.5,974.1 746.5,974.1 750.5,974.1 754.5,974.1 758.5,974.0 762.5,974.0 766.5,974.0 770.5,974.0 774.5,974.0 778.5,973.9 782.5,973.9 786.5,973.9 790.5,973.9 794.5,973.9 798.5,973.9 802.5,973.8 806.5,973.8 810.5,973.8 814.5,973.8 818.5,973.8 822.5,973.8 826.5,973.8 830.5,973.8 834.5,973.7 838.5,973.7 842.5,973.7 846.5,973.7 850.5,973.7 854.5,973.7 858.5,973.7 862.5,973.7 866.5,973.7 870.5,973.7 874.5,973.7 878.5,973.7 882.5,973.7 886.5,973.7 890.5,973.7 894.5,973.7 898.5,973.7 902.5,973.7 906.5,973.7 910.5,973.6 914.5,973.6 918.5,973.6 922.5,973.6 926.5,973.6 930.5,973.6 934.5,973.6 938.5,973.6 942.5,973.6 946.5,973.6 950.5,973.6 954.5,973.6 958.5,973.6 962.5,973.6 966.5,973.6 970.5,973.6 974.5,973.6 978.5,973.6 982.5,973.6 986.5,973.6 990.5,973.6 994.5,973.6 998.5,973.6 1002.5,973.6 1006.5,973.6 1010.5,973.6 1014.5,973.6 1018.5,973.6 1022.5,973.6 1026.5,973.6 1030.5,973.6 1034.5,973.6 1038.5,973.6 1042.5,973.6 1046.5,973.6 1050.5,973.6 1054.5,973.6 1058.5,973.6 1062.5,973.6 1066.5,973.6 1070.5,973.6 1074.5,973.5 1078.5,973.5 1082.5,973.5 1086.5,973.5 1090.5,973.5 1094.5,973.5 1098.5,973.5 1102.5,973.5 1106.5,973.5 1110.5,973.5 1114.5,973.5 1118.5,973.5 1122.5,973.5 1126.5,973.5 1130.5,973.5 1134.5,973.5 1138.5,973.5 1142.5,973.4 1146.5,973.4 1150.5,973.4 1154.5,973.4 1158.5,973.4 1162.5,973.4 1166.5,973.4 1170.5,973.4 1174.5,973.4 1178.5,973.4 1182.5,973.4 1186.5,973.4 1190.5,973.4 1194.5,973.4 1198.5,973.4 1202.5,973.4 1206.5,973.4 1210.5,973.3 1214.5,973.3 1218.5,973.3 1222.5,973.3 1226.5,973.3 1230.5,973.3 1234.5,973.3 1238.5,973.3 1242.5,973.3 1246.5,973.3 1250.5,973.3 1254.5,973.3 1258.5,973.3 1262.5,973.3 1266.5,973.3 1270.5,973.3 1274.5,973.3 1278.5,973.3 1282.5,973.3 1286.5,973.3 1290.5,973.3 1294.5,973.3 1298.5,973.3 1302.5,973.3 1306.5,973.3 1310.5,973.3 1314.5,973.3 1318.5,973.3 1322.5,973.3 1326.5,973.3 1330.5,973.3 1334.5,973.2 1338.5,973.2 1342.5,973.2 1346.5,973.2 1350.5,973.2 1354.5,973.2 1358.5,973.2 1362.5,973.2 1366.5,973.2 1370.5,973.2 1374.5,973.2 1378.5,973.2 1382.5,973.2 1386.5,973.2 1390.5,973.2 1394.5,973.2 1398.5,973.2 1402.5,973.2 1406.5,973.2 1410.5,973.2 1414.5,973.2 1418.5,973.2 1422.5,973.2 1426.5,973.2 1430.5,973.2 1434.5,973.2 1438.5,973.2 1442.5,973.2 1446.5,973.2 1450.5,973.2 1454.5,973.2 1458.5,973.2 1462.5,973.2 1466.5,973.2 1470.5,973.2 1474.5,973.2 1475.5,973.2 L1475.5,989.6 Z" fill="#dfbf63"/><path d="M594.5,989.6 L594.5,980.5 598.5,980.5 602.5,980.5 606.5,980.5 610.5,980.5 614.5,980.5 618.5,980.5 622.5,980.5 626.5,980.5 630.5,980.5 634.5,980.5 638.5,980.5 642.5,980.5 646.5,980.5 650.5,980.4 654.5,980.4 658.5,980.4 662.5,980.4 666.5,980.4 670.5,980.4 674.5,980.4 678.5,980.4 682.5,980.4 686.5,980.3 690.5,980.3 694.5,980.3 698.5,980.3 702.5,980.3 706.5,980.3 710.5,980.3 714.5,980.2 718.5,980.2 722.5,980.2 726.5,980.2 730.5,980.2 734.5,980.2 738.5,980.2 742.5,980.1 746.5,980.1 750.5,980.1 754.5,980.1 758.5,980.1 762.5,980.1 766.5,980.0 770.5,980.0 774.5,980.0 778.5,980.0 782.5,980.0 786.5,979.9 790.5,979.9 794.5,979.9 798.5,979.9 802.5,979.9 806.5,979.9 810.5,979.8 814.5,979.8 818.5,979.8 822.5,979.8 826.5,979.8 830.5,979.7 834.5,979.7 838.5,979.7 842.5,979.7 846.5,979.7 850.5,979.6 854.5,979.6 858.5,979.6 862.5,979.6 866.5,979.6 870.5,979.5 874.5,979.5 878.5,979.5 882.5,979.5 886.5,979.5 890.5,979.5 894.5,979.4 898.5,979.4 902.5,979.4 906.5,979.4 910.5,979.4 914.5,979.3 918.5,979.3 922.5,979.3 926.5,979.3 930.5,979.3 934.5,979.3 938.5,979.2 942.5,979.2 946.5,979.2 950.5,979.2 954.5,979.2 958.5,979.1 962.5,979.1 966.5,979.1 970.5,979.1 974.5,979.1 978.5,979.1 982.5,979.1 986.5,979.0 990.5,979.0 994.5,979.0 998.5,979.0 1002.5,979.0 1006.5,979.0 1010.5,979.0 1014.5,978.9 1018.5,978.9 1022.5,978.9 1026.5,978.9 1030.5,978.9 1034.5,978.9 1038.5,978.9 1042.5,978.9 1046.5,978.8 1050.5,978.8 1054.5,978.8 1058.5,978.8 1062.5,978.8 1066.5,978.8 1070.5,978.8 1074.5,978.8 1078.5,978.8 1082.5,978.8 1086.5,978.8 1090.5,978.8 1094.5,978.8 1098.5,978.7 1102.5,978.7 1106.5,978.7 1110.5,978.7 1114.5,978.7 1118.5,978.7 1122.5,978.7 1126.5,978.7 1130.5,978.7 1134.5,978.7 1138.5,978.7 1142.5,978.7 1146.5,978.7 1150.5,978.7 1154.5,978.7 1158.5,978.7 1162.5,978.7 1166.5,978.7 1170.5,978.7 1174.5,978.7 1178.5,978.8 1182.5,978.8 1186.5,978.8 1190.5,978.8 1194.5,978.8 1198.5,978.8 1202.5,978.8 1206.5,978.8 1210.5,978.8 1214.5,978.8 1218.5,978.8 1222.5,978.9 1226.5,978.9 1230.5,978.9 1234.5,978.9 1238.5,978.9 1242.5,978.9 1246.5,979.0 1250.5,979.0 1254.5,979.0 1258.5,979.0 1262.5,979.0 1266.5,979.1 1270.5,979.1 1274.5,979.1 1278.5,979.1 1282.5,979.1 1286.5,979.2 1290.5,979.2 1294.5,979.2 1298.5,979.2 1302.5,979.3 1306.5,979.3 1310.5,979.3 1314.5,979.4 1318.5,979.4 1322.5,979.4 1326.5,979.5 1330.5,979.5 1334.5,979.5 1338.5,979.6 1342.5,979.6 1346.5,979.6 1350.5,979.7 1354.5,979.7 1358.5,979.8 1362.5,979.8 1366.5,979.9 1370.5,979.9 1374.5,979.9 1378.5,980.0 1382.5,980.0 1386.5,980.1 1390.5,980.1 1394.5,980.2 1398.5,980.2 1402.5,980.3 1406.5,980.3 1410.5,980.4 1414.5,980.5 1418.5,980.5 1422.5,980.6 1426.5,980.6 1430.5,980.7 1434.5,980.7 1438.5,980.8 1442.5,980.9 1446.5,980.9 1450.5,981.0 1454.5,981.1 1458.5,981.1 1462.5,981.2 1466.5,981.3 1470.5,981.3 1474.5,981.4 1475.5,981.4 L1475.5,989.6 Z" fill="#d88a5e"/><path d="M594.5,989.6 L594.5,982.4 598.5,982.4 602.5,982.4 606.5,982.4 610.5,982.4 614.5,982.4 618.5,982.4 622.5,982.4 626.5,982.4 630.5,982.4 634.5,982.4 638.5,982.4 642.5,982.4 646.5,982.4 650.5,982.4 654.5,982.4 658.5,982.4 662.5,982.4 666.5,982.4 670.5,982.4 674.5,982.3 678.5,982.3 682.5,982.3 686.5,982.3 690.5,982.3 694.5,982.3 698.5,982.3 702.5,982.3 706.5,982.3 710.5,982.3 714.5,982.3 718.5,982.3 722.5,982.3 726.5,982.3 730.5,982.3 734.5,982.3 738.5,982.3 742.5,982.3 746.5,982.3 750.5,982.3 754.5,982.3 758.5,982.3 762.5,982.3 766.5,982.3 770.5,982.3 774.5,982.3 778.5,982.3 782.5,982.3 786.5,982.2 790.5,982.2 794.5,982.2 798.5,982.2 802.5,982.2 806.5,982.2 810.5,982.2 814.5,982.2 818.5,982.2 822.5,982.2 826.5,982.2 830.5,982.2 834.5,982.2 838.5,982.2 842.5,982.2 846.5,982.2 850.5,982.2 854.5,982.2 858.5,982.2 862.5,982.2 866.5,982.2 870.5,982.2 874.5,982.2 878.5,982.2 882.5,982.2 886.5,982.2 890.5,982.2 894.5,982.2 898.5,982.2 902.5,982.2 906.5,982.2 910.5,982.2 914.5,982.2 918.5,982.2 922.5,982.2 926.5,982.2 930.5,982.2 934.5,982.2 938.5,982.2 942.5,982.2 946.5,982.2 950.5,982.2 954.5,982.2 958.5,982.2 962.5,982.2 966.5,982.2 970.5,982.2 974.5,982.2 978.5,982.2 982.5,982.2 986.5,982.2 990.5,982.2 994.5,982.2 998.5,982.2 1002.5,982.2 1006.5,982.2 1010.5,982.2 1014.5,982.2 1018.5,982.2 1022.5,982.2 1026.5,982.2 1030.5,982.2 1034.5,982.2 1038.5,982.2 1042.5,982.2 1046.5,982.2 1050.5,982.2 1054.5,982.2 1058.5,982.2 1062.5,982.2 1066.5,982.2 1070.5,982.2 1074.5,982.2 1078.5,982.3 1082.5,982.3 1086.5,982.3 1090.5,982.3 1094.5,982.3 1098.5,982.3 1102.5,982.3 1106.5,982.3 1110.5,982.3 1114.5,982.3 1118.5,982.3 1122.5,982.3 1126.5,982.3 1130.5,982.3 1134.5,982.3 1138.5,982.4 1142.5,982.4 1146.5,982.4 1150.5,982.4 1154.5,982.4 1158.5,982.4 1162.5,982.4 1166.5,982.4 1170.5,982.4 1174.5,982.4 1178.5,982.4 1182.5,982.4 1186.5,982.5 1190.5,982.5 1194.5,982.5 1198.5,982.5 1202.5,982.5 1206.5,982.5 1210.5,982.5 1214.5,982.5 1218.5,982.5 1222.5,982.5 1226.5,982.6 1230.5,982.6 1234.5,982.6 1238.5,982.6 1242.5,982.6 1246.5,982.6 1250.5,982.6 1254.5,982.6 1258.5,982.6 1262.5,982.6 1266.5,982.7 1270.5,982.7 1274.5,982.7 1278.5,982.7 1282.5,982.7 1286.5,982.7 1290.5,982.7 1294.5,982.7 1298.5,982.7 1302.5,982.8 1306.5,982.8 1310.5,982.8 1314.5,982.8 1318.5,982.8 1322.5,982.8 1326.5,982.8 1330.5,982.8 1334.5,982.8 1338.5,982.8 1342.5,982.9 1346.5,982.9 1350.5,982.9 1354.5,982.9 1358.5,982.9 1362.5,982.9 1366.5,982.9 1370.5,982.9 1374.5,982.9 1378.5,983.0 1382.5,983.0 1386.5,983.0 1390.5,983.0 1394.5,983.0 1398.5,983.0 1402.5,983.0 1406.5,983.0 1410.5,983.0 1414.5,983.1 1418.5,983.1 1422.5,983.1 1426.5,983.1 1430.5,983.1 1434.5,983.1 1438.5,983.1 1442.5,983.1 1446.5,983.1 1450.5,983.1 1454.5,983.2 1458.5,983.2 1462.5,983.2 1466.5,983.2 1470.5,983.2 1474.5,983.2 1475.5,983.2 L1475.5,989.6 Z" fill="#7f8396"/><path d="M594.5,989.6 L594.5,983.0 598.5,983.0 602.5,983.0 606.5,983.0 610.5,983.0 614.5,983.0 618.5,983.0 622.5,983.0 626.5,983.0 630.5,983.0 634.5,983.0 638.5,983.0 642.5,983.0 646.5,983.0 650.5,983.0 654.5,983.0 658.5,983.0 662.5,983.0 666.5,983.0 670.5,983.0 674.5,983.0 678.5,983.0 682.5,983.0 686.5,983.0 690.5,983.0 694.5,983.0 698.5,983.0 702.5,983.0 706.5,983.0 710.5,983.0 714.5,983.0 718.5,983.0 722.5,983.0 726.5,983.0 730.5,983.0 734.5,983.0 738.5,983.0 742.5,983.0 746.5,983.0 750.5,983.0 754.5,983.0 758.5,983.0 762.5,983.0 766.5,983.0 770.5,983.0 774.5,983.0 778.5,982.9 782.5,982.9 786.5,982.9 790.5,982.9 794.5,982.9 798.5,982.9 802.5,982.9 806.5,982.9 810.5,982.9 814.5,982.9 818.5,982.9 822.5,982.9 826.5,982.9 830.5,982.9 834.5,982.9 838.5,982.9 842.5,982.9 846.5,982.9 850.5,982.9 854.5,982.9 858.5,982.9 862.5,982.9 866.5,982.9 870.5,982.9 874.5,982.9 878.5,982.9 882.5,982.9 886.5,982.9 890.5,982.9 894.5,982.9 898.5,982.9 902.5,982.9 906.5,982.9 910.5,982.9 914.5,982.9 918.5,982.9 922.5,982.9 926.5,982.9 930.5,982.9 934.5,982.9 938.5,982.9 942.5,982.9 946.5,982.9 950.5,982.9 954.5,982.9 958.5,982.9 962.5,982.9 966.5,982.9 970.5,982.9 974.5,982.9 978.5,983.0 982.5,983.0 986.5,983.0 990.5,983.0 994.5,983.0 998.5,983.0 1002.5,983.0 1006.5,983.0 1010.5,983.0 1014.5,983.0 1018.5,983.0 1022.5,983.0 1026.5,983.0 1030.5,983.0 1034.5,983.0 1038.5,983.0 1042.5,983.0 1046.5,983.0 1050.5,983.0 1054.5,983.0 1058.5,983.0 1062.5,983.0 1066.5,983.0 1070.5,983.0 1074.5,983.1 1078.5,983.1 1082.5,983.1 1086.5,983.1 1090.5,983.1 1094.5,983.1 1098.5,983.1 1102.5,983.1 1106.5,983.1 1110.5,983.1 1114.5,983.1 1118.5,983.1 1122.5,983.1 1126.5,983.1 1130.5,983.2 1134.5,983.2 1138.5,983.2 1142.5,983.2 1146.5,983.2 1150.5,983.2 1154.5,983.2 1158.5,983.2 1162.5,983.2 1166.5,983.2 1170.5,983.2 1174.5,983.2 1178.5,983.3 1182.5,983.3 1186.5,983.3 1190.5,983.3 1194.5,983.3 1198.5,983.3 1202.5,983.3 1206.5,983.3 1210.5,983.3 1214.5,983.3 1218.5,983.3 1222.5,983.4 1226.5,983.4 1230.5,983.4 1234.5,983.4 1238.5,983.4 1242.5,983.4 1246.5,983.4 1250.5,983.4 1254.5,983.4 1258.5,983.4 1262.5,983.5 1266.5,983.5 1270.5,983.5 1274.5,983.5 1278.5,983.5 1282.5,983.5 1286.5,983.5 1290.5,983.5 1294.5,983.5 1298.5,983.6 1302.5,983.6 1306.5,983.6 1310.5,983.6 1314.5,983.6 1318.5,983.6 1322.5,983.6 1326.5,983.6 1330.5,983.6 1334.5,983.6 1338.5,983.7 1342.5,983.7 1346.5,983.7 1350.5,983.7 1354.5,983.7 1358.5,983.7 1362.5,983.7 1366.5,983.7 1370.5,983.7 1374.5,983.8 1378.5,983.8 1382.5,983.8 1386.5,983.8 1390.5,983.8 1394.5,983.8 1398.5,983.8 1402.5,983.8 1406.5,983.8 1410.5,983.8 1414.5,983.9 1418.5,983.9 1422.5,983.9 1426.5,983.9 1430.5,983.9 1434.5,983.9 1438.5,983.9 1442.5,983.9 1446.5,983.9 1450.5,983.9 1454.5,984.0 1458.5,984.0 1462.5,984.0 1466.5,984.0 1470.5,984.0 1474.5,984.0 1475.5,984.0 L1475.5,989.6 Z" fill="#a89290"/><path d="M594.5,989.6 L594.5,985.6 598.5,985.6 602.5,985.6 606.5,985.6 610.5,985.6 614.5,985.6 618.5,985.6 622.5,985.6 626.5,985.6 630.5,985.6 634.5,985.6 638.5,985.6 642.5,985.6 646.5,985.6 650.5,985.6 654.5,985.6 658.5,985.6 662.5,985.6 666.5,985.6 670.5,985.6 674.5,985.6 678.5,985.6 682.5,985.6 686.5,985.6 690.5,985.6 694.5,985.6 698.5,985.6 702.5,985.6 706.5,985.6 710.5,985.6 714.5,985.6 718.5,985.6 722.5,985.6 726.5,985.6 730.5,985.6 734.5,985.6 738.5,985.6 742.5,985.6 746.5,985.6 750.5,985.6 754.5,985.6 758.5,985.6 762.5,985.6 766.5,985.6 770.5,985.6 774.5,985.6 778.5,985.6 782.5,985.6 786.5,985.6 790.5,985.6 794.5,985.6 798.5,985.6 802.5,985.6 806.5,985.6 810.5,985.6 814.5,985.6 818.5,985.6 822.5,985.6 826.5,985.6 830.5,985.6 834.5,985.6 838.5,985.6 842.5,985.6 846.5,985.6 850.5,985.6 854.5,985.6 858.5,985.6 862.5,985.6 866.5,985.6 870.5,985.6 874.5,985.6 878.5,985.6 882.5,985.6 886.5,985.6 890.5,985.6 894.5,985.6 898.5,985.6 902.5,985.6 906.5,985.6 910.5,985.6 914.5,985.6 918.5,985.6 922.5,985.6 926.5,985.6 930.5,985.6 934.5,985.6 938.5,985.6 942.5,985.6 946.5,985.6 950.5,985.6 954.5,985.6 958.5,985.6 962.5,985.6 966.5,985.6 970.5,985.6 974.5,985.6 978.5,985.6 982.5,985.6 986.5,985.6 990.5,985.6 994.5,985.6 998.5,985.6 1002.5,985.6 1006.5,985.6 1010.5,985.6 1014.5,985.6 1018.5,985.6 1022.5,985.6 1026.5,985.6 1030.5,985.6 1034.5,985.6 1038.5,985.6 1042.5,985.6 1046.5,985.6 1050.5,985.6 1054.5,985.6 1058.5,985.6 1062.5,985.6 1066.5,985.6 1070.5,985.6 1074.5,985.6 1078.5,985.6 1082.5,985.6 1086.5,985.6 1090.5,985.6 1094.5,985.7 1098.5,985.7 1102.5,985.7 1106.5,985.7 1110.5,985.7 1114.5,985.7 1118.5,985.7 1122.5,985.7 1126.5,985.7 1130.5,985.7 1134.5,985.7 1138.5,985.7 1142.5,985.7 1146.5,985.7 1150.5,985.7 1154.5,985.7 1158.5,985.7 1162.5,985.7 1166.5,985.7 1170.5,985.7 1174.5,985.7 1178.5,985.8 1182.5,985.8 1186.5,985.8 1190.5,985.8 1194.5,985.8 1198.5,985.8 1202.5,985.8 1206.5,985.8 1210.5,985.8 1214.5,985.8 1218.5,985.8 1222.5,985.8 1226.5,985.8 1230.5,985.8 1234.5,985.8 1238.5,985.8 1242.5,985.8 1246.5,985.9 1250.5,985.9 1254.5,985.9 1258.5,985.9 1262.5,985.9 1266.5,985.9 1270.5,985.9 1274.5,985.9 1278.5,985.9 1282.5,985.9 1286.5,985.9 1290.5,985.9 1294.5,985.9 1298.5,985.9 1302.5,985.9 1306.5,985.9 1310.5,985.9 1314.5,986.0 1318.5,986.0 1322.5,986.0 1326.5,986.0 1330.5,986.0 1334.5,986.0 1338.5,986.0 1342.5,986.0 1346.5,986.0 1350.5,986.0 1354.5,986.0 1358.5,986.0 1362.5,986.0 1366.5,986.0 1370.5,986.0 1374.5,986.1 1378.5,986.1 1382.5,986.1 1386.5,986.1 1390.5,986.1 1394.5,986.1 1398.5,986.1 1402.5,986.1 1406.5,986.1 1410.5,986.1 1414.5,986.1 1418.5,986.1 1422.5,986.1 1426.5,986.1 1430.5,986.1 1434.5,986.1 1438.5,986.1 1442.5,986.2 1446.5,986.2 1450.5,986.2 1454.5,986.2 1458.5,986.2 1462.5,986.2 1466.5,986.2 1470.5,986.2 1474.5,986.2 1475.5,986.2 L1475.5,989.6 Z" fill="#6a70ae"/><path d="M594.5,989.6 L594.5,988.2 598.5,988.2 602.5,988.2 606.5,988.2 610.5,988.2 614.5,988.2 618.5,988.2 622.5,988.2 626.5,988.2 630.5,988.2 634.5,988.2 638.5,988.2 642.5,988.2 646.5,988.2 650.5,988.2 654.5,988.2 658.5,988.2 662.5,988.2 666.5,988.2 670.5,988.2 674.5,988.2 678.5,988.2 682.5,988.2 686.5,988.2 690.5,988.2 694.5,988.2 698.5,988.2 702.5,988.2 706.5,988.2 710.5,988.2 714.5,988.2 718.5,988.2 722.5,988.2 726.5,988.2 730.5,988.2 734.5,988.2 738.5,988.2 742.5,988.2 746.5,988.2 750.5,988.2 754.5,988.2 758.5,988.2 762.5,988.2 766.5,988.2 770.5,988.2 774.5,988.2 778.5,988.2 782.5,988.2 786.5,988.2 790.5,988.2 794.5,988.2 798.5,988.2 802.5,988.2 806.5,988.2 810.5,988.2 814.5,988.2 818.5,988.2 822.5,988.2 826.5,988.2 830.5,988.2 834.5,988.2 838.5,988.2 842.5,988.2 846.5,988.2 850.5,988.2 854.5,988.2 858.5,988.2 862.5,988.2 866.5,988.2 870.5,988.2 874.5,988.2 878.5,988.2 882.5,988.2 886.5,988.2 890.5,988.2 894.5,988.2 898.5,988.2 902.5,988.2 906.5,988.2 910.5,988.2 914.5,988.2 918.5,988.2 922.5,988.2 926.5,988.2 930.5,988.2 934.5,988.2 938.5,988.2 942.5,988.2 946.5,988.2 950.5,988.2 954.5,988.2 958.5,988.2 962.5,988.2 966.5,988.2 970.5,988.2 974.5,988.2 978.5,988.2 982.5,988.2 986.5,988.2 990.5,988.2 994.5,988.2 998.5,988.2 1002.5,988.2 1006.5,988.2 1010.5,988.2 1014.5,988.2 1018.5,988.2 1022.5,988.2 1026.5,988.2 1030.5,988.2 1034.5,988.2 1038.5,988.2 1042.5,988.2 1046.5,988.2 1050.5,988.2 1054.5,988.2 1058.5,988.2 1062.5,988.2 1066.5,988.2 1070.5,988.2 1074.5,988.2 1078.5,988.2 1082.5,988.2 1086.5,988.2 1090.5,988.2 1094.5,988.2 1098.5,988.2 1102.5,988.2 1106.5,988.2 1110.5,988.2 1114.5,988.2 1118.5,988.2 1122.5,988.2 1126.5,988.2 1130.5,988.2 1134.5,988.2 1138.5,988.2 1142.5,988.2 1146.5,988.2 1150.5,988.2 1154.5,988.2 1158.5,988.2 1162.5,988.2 1166.5,988.2 1170.5,988.2 1174.5,988.2 1178.5,988.2 1182.5,988.2 1186.5,988.2 1190.5,988.2 1194.5,988.2 1198.5,988.2 1202.5,988.2 1206.5,988.2 1210.5,988.2 1214.5,988.2 1218.5,988.2 1222.5,988.2 1226.5,988.2 1230.5,988.2 1234.5,988.2 1238.5,988.2 1242.5,988.2 1246.5,988.2 1250.5,988.2 1254.5,988.2 1258.5,988.2 1262.5,988.2 1266.5,988.2 1270.5,988.2 1274.5,988.2 1278.5,988.2 1282.5,988.2 1286.5,988.2 1290.5,988.2 1294.5,988.2 1298.5,988.2 1302.5,988.2 1306.5,988.2 1310.5,988.2 1314.5,988.2 1318.5,988.2 1322.5,988.2 1326.5,988.2 1330.5,988.2 1334.5,988.2 1338.5,988.2 1342.5,988.2 1346.5,988.2 1350.5,988.2 1354.5,988.2 1358.5,988.2 1362.5,988.2 1366.5,988.2 1370.5,988.2 1374.5,988.2 1378.5,988.2 1382.5,988.2 1386.5,988.2 1390.5,988.2 1394.5,988.2 1398.5,988.2 1402.5,988.2 1406.5,988.2 1410.5,988.2 1414.5,988.2 1418.5,988.2 1422.5,988.2 1426.5,988.2 1430.5,988.2 1434.5,988.2 1438.5,988.2 1442.5,988.2 1446.5,988.2 1450.5,988.2 1454.5,988.2 1458.5,988.2 1462.5,988.2 1466.5,988.2 1470.5,988.2 1474.5,988.2 1475.5,988.2 L1475.5,989.6 Z" fill="#5c2a55"/><path d="M1206.5,875.1 1210.5,874.7 1214.5,874.3 1218.5,873.9 1222.5,873.5 1226.5,873.2 1230.5,872.8 1234.5,872.5 1238.5,872.1 1242.5,871.8 1246.5,871.5 1250.5,871.3 1254.5,871.0 1258.5,870.8 1262.5,870.5 1266.5,870.3 1270.5,870.1 1274.5,870.0 1278.5,869.8 1282.5,869.7 1286.5,869.6 1290.5,869.5 1294.5,869.4 1298.5,869.3 1302.5,869.2 1306.5,869.2 1310.5,869.2 1314.5,869.2 1318.5,869.2 1322.5,869.2 1326.5,869.2 1330.5,869.3 1334.5,869.3 1338.5,869.4 1342.5,869.5 1346.5,869.6 1350.5,869.7 1354.5,869.9 1358.5,870.0 1362.5,870.2 1366.5,870.3 1370.5,870.5 1374.5,870.7 1378.5,870.9 1382.5,871.2 1386.5,871.4 1390.5,871.6 1394.5,871.9 1398.5,872.2 1402.5,872.5 1406.5,872.8 1410.5,873.1 1414.5,873.4 1418.5,873.7 1422.5,874.1 1426.5,874.4 1430.5,874.8 1434.5,875.1 1438.5,875.5 1442.5,875.9 1446.5,876.3 1450.5,876.7 1454.5,877.1 1458.5,877.6 1462.5,878.0 1466.5,878.4 1470.5,878.9 1474.5,879.4 1475.5,879.5 L1475.5,900.8 1474.5,900.7 1470.5,900.4 1466.5,900.1 1462.5,899.8 1458.5,899.4 1454.5,899.1 1450.5,898.8 1446.5,898.4 1442.5,898.1 1438.5,897.8 1434.5,897.4 1430.5,897.1 1426.5,896.7 1422.5,896.3 1418.5,896.0 1414.5,895.6 1410.5,895.2 1406.5,894.9 1402.5,894.5 1398.5,894.1 1394.5,893.7 1390.5,893.4 1386.5,893.0 1382.5,892.6 1378.5,892.2 1374.5,891.8 1370.5,891.4 1366.5,891.0 1362.5,890.6 1358.5,890.2 1354.5,889.8 1350.5,889.4 1346.5,889.0 1342.5,888.6 1338.5,888.2 1334.5,887.8 1330.5,887.4 1326.5,887.0 1322.5,886.6 1318.5,886.2 1314.5,885.8 1310.5,885.3 1306.5,884.9 1302.5,884.5 1298.5,884.1 1294.5,883.7 1290.5,883.3 1286.5,882.9 1282.5,882.5 1278.5,882.1 1274.5,881.7 1270.5,881.3 1266.5,880.9 1262.5,880.5 1258.5,880.1 1254.5,879.7 1250.5,879.3 1246.5,878.9 1242.5,878.5 1238.5,878.1 1234.5,877.8 1230.5,877.4 1226.5,877.0 1222.5,876.6 1218.5,876.2 1214.5,875.9 1210.5,875.5 1206.5,875.1 Z" fill="#6aa6b6"/><polyline points="594.5,402.5 598.5,401.3 602.5,400.0 606.5,398.8 610.5,397.6 614.5,396.3 618.5,395.1 622.5,393.9 626.5,392.7 630.5,391.5 634.5,390.3 638.5,389.1 642.5,388.0 646.5,386.8 650.5,385.7 654.5,384.6 658.5,383.5 662.5,382.4 666.5,381.3 670.5,380.3 674.5,379.3 678.5,378.3 682.5,377.3 686.5,376.4 690.5,375.5 694.5,374.6 698.5,373.8 702.5,372.9 706.5,372.2 710.5,371.4 714.5,370.7 718.5,370.0 722.5,369.4 726.5,368.8 730.5,368.3 734.5,367.8 738.5,367.3 742.5,366.9 746.5,366.5 750.5,366.2 754.5,365.9 758.5,365.7 762.5,365.5 766.5,365.4 770.5,365.3 774.5,365.2 778.5,365.3 782.5,365.3 786.5,365.4 790.5,365.6 794.5,365.8 798.5,366.1 802.5,366.4 806.5,366.8 810.5,367.2 814.5,367.7 818.5,368.2 822.5,368.8 826.5,369.4 830.5,370.1 834.5,370.9 838.5,371.6 842.5,372.4 846.5,373.3 850.5,374.2 854.5,375.1 858.5,376.1 862.5,377.1 866.5,378.1 870.5,379.1 874.5,380.2 878.5,381.2 882.5,382.3 886.5,383.4 890.5,384.6 894.5,385.7 898.5,386.8 902.5,388.0 906.5,389.1 910.5,390.3 914.5,391.4 918.5,392.6 922.5,393.7 926.5,394.8 930.5,395.9 934.5,397.1 938.5,398.1 942.5,399.2 946.5,400.3 950.5,401.3 954.5,402.3 958.5,403.3 962.5,404.2 966.5,405.1 970.5,406.0 974.5,406.8 978.5,407.6 982.5,408.4 986.5,409.1 990.5,409.8 994.5,410.4 998.5,411.0 1002.5,411.5 1006.5,411.9 1010.5,412.3 1014.5,412.7 1018.5,413.0 1022.5,413.2 1026.5,413.3 1030.5,413.4 1034.5,413.4 1038.5,413.3 1042.5,413.2 1046.5,413.0 1050.5,412.7 1054.5,412.3 1058.5,411.9 1062.5,411.5 1066.5,410.9 1070.5,410.4 1074.5,409.7 1078.5,409.0 1082.5,408.3 1086.5,407.5 1090.5,406.7 1094.5,405.8 1098.5,404.9 1102.5,403.9 1106.5,402.9 1110.5,401.9 1114.5,400.9 1118.5,399.8 1122.5,398.7 1126.5,397.6 1130.5,396.4 1134.5,395.3 1138.5,394.1 1142.5,392.9 1146.5,391.7 1150.5,390.5 1154.5,389.3 1158.5,388.0 1162.5,386.8 1166.5,385.6 1170.5,384.4 1174.5,383.2 1178.5,382.0 1182.5,380.8 1186.5,379.6 1190.5,378.4 1194.5,377.2 1198.5,376.1 1202.5,375.0 1206.5,373.9 1210.5,372.8 1214.5,371.8 1218.5,370.8 1222.5,369.8 1226.5,368.9 1230.5,368.0 1234.5,367.2 1238.5,366.3 1242.5,365.6 1246.5,364.9 1250.5,364.2 1254.5,363.6 1258.5,363.0 1262.5,362.5 1266.5,362.0 1270.5,361.6 1274.5,361.3 1278.5,361.0 1282.5,360.7 1286.5,360.5 1290.5,360.4 1294.5,360.3 1298.5,360.2 1302.5,360.2 1306.5,360.2 1310.5,360.3 1314.5,360.4 1318.5,360.5 1322.5,360.7 1326.5,360.9 1330.5,361.2 1334.5,361.5 1338.5,361.8 1342.5,362.2 1346.5,362.6 1350.5,363.0 1354.5,363.5 1358.5,364.0 1362.5,364.5 1366.5,365.0 1370.5,365.6 1374.5,366.2 1378.5,366.9 1382.5,367.5 1386.5,368.2 1390.5,368.9 1394.5,369.6 1398.5,370.4 1402.5,371.1 1406.5,371.9 1410.5,372.7 1414.5,373.6 1418.5,374.4 1422.5,375.2 1426.5,376.1 1430.5,377.0 1434.5,377.9 1438.5,378.8 1442.5,379.7 1446.5,380.6 1450.5,381.6 1454.5,382.5 1458.5,383.4 1462.5,384.4 1466.5,385.3 1470.5,386.3 1474.5,387.3 1475.5,387.5" fill="none" stroke="#7a8192" stroke-width="1.1" stroke-opacity="1"/><polyline points="594.5,475.8 598.5,475.5 602.5,475.2 606.5,474.9 610.5,474.7 614.5,474.4 618.5,474.1 622.5,473.8 626.5,473.5 630.5,473.2 634.5,472.9 638.5,472.6 642.5,472.3 646.5,472.0 650.5,471.7 654.5,471.4 658.5,471.1 662.5,470.7 666.5,470.4 670.5,470.1 674.5,469.7 678.5,469.4 682.5,469.0 686.5,468.7 690.5,468.3 694.5,467.9 698.5,467.6 702.5,467.2 706.5,466.8 710.5,466.4 714.5,466.0 718.5,465.6 722.5,465.2 726.5,464.7 730.5,464.3 734.5,463.9 738.5,463.4 742.5,462.9 746.5,462.5 750.5,462.0 754.5,461.5 758.5,461.0 762.5,460.5 766.5,460.0 770.5,459.4 774.5,458.9 778.5,458.3 782.5,457.7 786.5,457.1 790.5,456.5 794.5,455.9 798.5,455.2 802.5,454.5 806.5,453.8 810.5,453.1 814.5,452.3 818.5,451.6 822.5,450.8 826.5,450.0 830.5,449.1 834.5,448.3 838.5,447.4 842.5,446.6 846.5,445.7 850.5,444.8 854.5,443.9 858.5,443.0 862.5,442.1 866.5,441.2 870.5,440.2 874.5,439.3 878.5,438.4 882.5,437.5 886.5,436.6 890.5,435.7 894.5,434.8 898.5,433.9 902.5,433.0 906.5,432.2 910.5,431.3 914.5,430.5 918.5,429.7 922.5,428.8 926.5,428.0 930.5,427.2 934.5,426.5 938.5,425.7 942.5,425.0 946.5,424.3 950.5,423.6 954.5,422.9 958.5,422.3 962.5,421.6 966.5,421.0 970.5,420.4 974.5,419.9 978.5,419.3 982.5,418.8 986.5,418.3 990.5,417.9 994.5,417.4 998.5,417.0 1002.5,416.6 1006.5,416.3 1010.5,415.9 1014.5,415.6 1018.5,415.3 1022.5,415.1 1026.5,414.8 1030.5,414.6 1034.5,414.5 1038.5,414.3 1042.5,414.2 1046.5,414.1 1050.5,414.0 1054.5,414.0 1058.5,414.0 1062.5,414.0 1066.5,414.1 1070.5,414.1 1074.5,414.2 1078.5,414.3 1082.5,414.5 1086.5,414.6 1090.5,414.8 1094.5,415.0 1098.5,415.2 1102.5,415.4 1106.5,415.7 1110.5,416.0 1114.5,416.2 1118.5,416.6 1122.5,416.9 1126.5,417.2 1130.5,417.6 1134.5,417.9 1138.5,418.3 1142.5,418.7 1146.5,419.1 1150.5,419.5 1154.5,420.0 1158.5,420.4 1162.5,420.9 1166.5,421.3 1170.5,421.8 1174.5,422.3 1178.5,422.8 1182.5,423.3 1186.5,423.8 1190.5,424.3 1194.5,424.8 1198.5,425.3 1202.5,425.8 1206.5,426.4 1210.5,426.9 1214.5,427.4 1218.5,428.0 1222.5,428.5 1226.5,429.1 1230.5,429.6 1234.5,430.1 1238.5,430.7 1242.5,431.2 1246.5,431.7 1250.5,432.3 1254.5,432.8 1258.5,433.3 1262.5,433.8 1266.5,434.4 1270.5,434.9 1274.5,435.4 1278.5,435.9 1282.5,436.4 1286.5,436.9 1290.5,437.4 1294.5,437.8 1298.5,438.3 1302.5,438.8 1306.5,439.3 1310.5,439.7 1314.5,440.2 1318.5,440.6 1322.5,441.1 1326.5,441.5 1330.5,442.0 1334.5,442.4 1338.5,442.8 1342.5,443.3 1346.5,443.7 1350.5,444.1 1354.5,444.5 1358.5,444.9 1362.5,445.3 1366.5,445.7 1370.5,446.0 1374.5,446.4 1378.5,446.8 1382.5,447.1 1386.5,447.5 1390.5,447.8 1394.5,448.1 1398.5,448.5 1402.5,448.8 1406.5,449.1 1410.5,449.4 1414.5,449.7 1418.5,450.0 1422.5,450.3 1426.5,450.6 1430.5,450.8 1434.5,451.1 1438.5,451.3 1442.5,451.6 1446.5,451.8 1450.5,452.1 1454.5,452.3 1458.5,452.5 1462.5,452.7 1466.5,452.9 1470.5,453.1 1474.5,453.2 1475.5,453.3" fill="none" stroke="#8a4ea6" stroke-width="1.1" stroke-opacity="1"/><polyline points="594.5,806.7 598.5,806.9 602.5,807.0 606.5,807.1 610.5,807.1 614.5,807.2 618.5,807.3 622.5,807.3 626.5,807.4 630.5,807.4 634.5,807.5 638.5,807.5 642.5,807.5 646.5,807.5 650.5,807.5 654.5,807.4 658.5,807.4 662.5,807.4 666.5,807.3 670.5,807.3 674.5,807.2 678.5,807.2 682.5,807.1 686.5,807.0 690.5,806.9 694.5,806.8 698.5,806.7 702.5,806.6 706.5,806.5 710.5,806.3 714.5,806.2 718.5,806.0 722.5,805.9 726.5,805.7 730.5,805.6 734.5,805.4 738.5,805.2 742.5,805.1 746.5,804.9 750.5,804.7 754.5,804.5 758.5,804.3 762.5,804.1 766.5,803.9 770.5,803.7 774.5,803.5 778.5,803.2 782.5,803.0 786.5,802.8 790.5,802.5 794.5,802.3 798.5,802.1 802.5,801.8 806.5,801.6 810.5,801.3 814.5,801.0 818.5,800.8 822.5,800.5 826.5,800.3 830.5,800.0 834.5,799.7 838.5,799.4 842.5,799.2 846.5,798.9 850.5,798.6 854.5,798.3 858.5,798.1 862.5,797.8 866.5,797.5 870.5,797.2 874.5,796.9 878.5,796.6 882.5,796.4 886.5,796.1 890.5,795.8 894.5,795.5 898.5,795.2 902.5,794.9 906.5,794.7 910.5,794.4 914.5,794.1 918.5,793.8 922.5,793.6 926.5,793.3 930.5,793.0 934.5,792.8 938.5,792.5 942.5,792.2 946.5,792.0 950.5,791.7 954.5,791.5 958.5,791.3 962.5,791.0 966.5,790.8 970.5,790.6 974.5,790.4 978.5,790.2 982.5,790.0 986.5,789.8 990.5,789.6 994.5,789.4 998.5,789.2 1002.5,789.1 1006.5,788.9 1010.5,788.8 1014.5,788.6 1018.5,788.5 1022.5,788.4 1026.5,788.3 1030.5,788.2 1034.5,788.1 1038.5,788.0 1042.5,787.9 1046.5,787.9 1050.5,787.8 1054.5,787.8 1058.5,787.8 1062.5,787.7 1066.5,787.7 1070.5,787.8 1074.5,787.8 1078.5,787.8 1082.5,787.9 1086.5,787.9 1090.5,788.0 1094.5,788.0 1098.5,788.1 1102.5,788.2 1106.5,788.3 1110.5,788.4 1114.5,788.6 1118.5,788.7 1122.5,788.8 1126.5,789.0 1130.5,789.1 1134.5,789.3 1138.5,789.4 1142.5,789.6 1146.5,789.8 1150.5,790.0 1154.5,790.1 1158.5,790.3 1162.5,790.5 1166.5,790.7 1170.5,790.9 1174.5,791.1 1178.5,791.3 1182.5,791.6 1186.5,791.8 1190.5,792.0 1194.5,792.2 1198.5,792.4 1202.5,792.7 1206.5,792.9 1210.5,793.1 1214.5,793.3 1218.5,793.6 1222.5,793.8 1226.5,794.0 1230.5,794.3 1234.5,794.5 1238.5,794.7 1242.5,794.9 1246.5,795.1 1250.5,795.4 1254.5,795.6 1258.5,795.8 1262.5,796.0 1266.5,796.2 1270.5,796.4 1274.5,796.6 1278.5,796.8 1282.5,797.0 1286.5,797.2 1290.5,797.4 1294.5,797.6 1298.5,797.7 1302.5,797.9 1306.5,798.1 1310.5,798.3 1314.5,798.4 1318.5,798.6 1322.5,798.7 1326.5,798.9 1330.5,799.1 1334.5,799.2 1338.5,799.3 1342.5,799.5 1346.5,799.6 1350.5,799.8 1354.5,799.9 1358.5,800.0 1362.5,800.1 1366.5,800.3 1370.5,800.4 1374.5,800.5 1378.5,800.6 1382.5,800.7 1386.5,800.8 1390.5,800.9 1394.5,801.0 1398.5,801.1 1402.5,801.2 1406.5,801.2 1410.5,801.3 1414.5,801.4 1418.5,801.4 1422.5,801.5 1426.5,801.6 1430.5,801.6 1434.5,801.7 1438.5,801.7 1442.5,801.7 1446.5,801.8 1450.5,801.8 1454.5,801.8 1458.5,801.8 1462.5,801.9 1466.5,801.9 1470.5,801.9 1474.5,801.9 1475.5,801.9" fill="none" stroke="#5e58a0" stroke-width="1.1" stroke-opacity="1"/><polyline points="594.5,889.4 598.5,889.0 602.5,888.5 606.5,888.1 610.5,887.7 614.5,887.3 618.5,886.9 622.5,886.5 626.5,886.1 630.5,885.7 634.5,885.3 638.5,884.9 642.5,884.5 646.5,884.1 650.5,883.7 654.5,883.3 658.5,882.9 662.5,882.5 666.5,882.1 670.5,881.8 674.5,881.4 678.5,881.0 682.5,880.6 686.5,880.2 690.5,879.9 694.5,879.5 698.5,879.1 702.5,878.8 706.5,878.4 710.5,878.0 714.5,877.7 718.5,877.3 722.5,877.0 726.5,876.6 730.5,876.3 734.5,875.9 738.5,875.6 742.5,875.2 746.5,874.9 750.5,874.6 754.5,874.2 758.5,873.9 762.5,873.6 766.5,873.3 770.5,873.0 774.5,872.6 778.5,872.3 782.5,872.0 786.5,871.7 790.5,871.4 794.5,871.2 798.5,870.9 802.5,870.6 806.5,870.3 810.5,870.0 814.5,869.8 818.5,869.5 822.5,869.3 826.5,869.0 830.5,868.8 834.5,868.5 838.5,868.3 842.5,868.0 846.5,867.8 850.5,867.6 854.5,867.4 858.5,867.2 862.5,866.9 866.5,866.7 870.5,866.6 874.5,866.4 878.5,866.2 882.5,866.0 886.5,865.8 890.5,865.7 894.5,865.5 898.5,865.3 902.5,865.2 906.5,865.1 910.5,864.9 914.5,864.8 918.5,864.7 922.5,864.6 926.5,864.4 930.5,864.3 934.5,864.3 938.5,864.2 942.5,864.1 946.5,864.0 950.5,863.9 954.5,863.9 958.5,863.8 962.5,863.8 966.5,863.7 970.5,863.7 974.5,863.7 978.5,863.7 982.5,863.7 986.5,863.7 990.5,863.7 994.5,863.7 998.5,863.7 1002.5,863.7 1006.5,863.8 1010.5,863.8 1014.5,863.9 1018.5,864.0 1022.5,864.0 1026.5,864.1 1030.5,864.2 1034.5,864.3 1038.5,864.4 1042.5,864.5 1046.5,864.6 1050.5,864.8 1054.5,864.9 1058.5,865.1 1062.5,865.2 1066.5,865.4 1070.5,865.6 1074.5,865.7 1078.5,865.9 1082.5,866.1 1086.5,866.3 1090.5,866.5 1094.5,866.8 1098.5,867.0 1102.5,867.2 1106.5,867.4 1110.5,867.7 1114.5,867.9 1118.5,868.2 1122.5,868.5 1126.5,868.7 1130.5,869.0 1134.5,869.3 1138.5,869.6 1142.5,869.9 1146.5,870.1 1150.5,870.4 1154.5,870.8 1158.5,871.1 1162.5,871.4 1166.5,871.7 1170.5,872.0 1174.5,872.4 1178.5,872.7 1182.5,873.0 1186.5,873.4 1190.5,873.7 1194.5,874.1 1198.5,874.4 1202.5,874.8 1206.5,875.1 1210.5,875.5 1214.5,875.9 1218.5,876.2 1222.5,876.6 1226.5,877.0 1230.5,877.4 1234.5,877.8 1238.5,878.1 1242.5,878.5 1246.5,878.9 1250.5,879.3 1254.5,879.7 1258.5,880.1 1262.5,880.5 1266.5,880.9 1270.5,881.3 1274.5,881.7 1278.5,882.1 1282.5,882.5 1286.5,882.9 1290.5,883.3 1294.5,883.7 1298.5,884.1 1302.5,884.5 1306.5,884.9 1310.5,885.3 1314.5,885.8 1318.5,886.2 1322.5,886.6 1326.5,887.0 1330.5,887.4 1334.5,887.8 1338.5,888.2 1342.5,888.6 1346.5,889.0 1350.5,889.4 1354.5,889.8 1358.5,890.2 1362.5,890.6 1366.5,891.0 1370.5,891.4 1374.5,891.8 1378.5,892.2 1382.5,892.6 1386.5,893.0 1390.5,893.4 1394.5,893.7 1398.5,894.1 1402.5,894.5 1406.5,894.9 1410.5,895.2 1414.5,895.6 1418.5,896.0 1422.5,896.3 1426.5,896.7 1430.5,897.1 1434.5,897.4 1438.5,897.8 1442.5,898.1 1446.5,898.4 1450.5,898.8 1454.5,899.1 1458.5,899.4 1462.5,899.8 1466.5,900.1 1470.5,900.4 1474.5,900.7 1475.5,900.8" fill="none" stroke="#5a98b8" stroke-width="1.1" stroke-opacity="1"/><polyline points="594.5,916.7 598.5,916.3 602.5,915.9 606.5,915.5 610.5,915.1 614.5,914.8 618.5,914.4 622.5,914.1 626.5,913.8 630.5,913.5 634.5,913.2 638.5,912.9 642.5,912.6 646.5,912.3 650.5,912.0 654.5,911.8 658.5,911.5 662.5,911.3 666.5,911.1 670.5,910.9 674.5,910.6 678.5,910.4 682.5,910.2 686.5,910.1 690.5,909.9 694.5,909.7 698.5,909.5 702.5,909.4 706.5,909.2 710.5,909.1 714.5,908.9 718.5,908.8 722.5,908.6 726.5,908.5 730.5,908.4 734.5,908.3 738.5,908.1 742.5,908.0 746.5,907.9 750.5,907.8 754.5,907.7 758.5,907.6 762.5,907.5 766.5,907.4 770.5,907.4 774.5,907.3 778.5,907.2 782.5,907.1 786.5,907.0 790.5,906.9 794.5,906.9 798.5,906.8 802.5,906.7 806.5,906.6 810.5,906.6 814.5,906.5 818.5,906.4 822.5,906.3 826.5,906.3 830.5,906.2 834.5,906.1 838.5,906.0 842.5,906.0 846.5,905.9 850.5,905.8 854.5,905.7 858.5,905.6 862.5,905.6 866.5,905.5 870.5,905.4 874.5,905.3 878.5,905.2 882.5,905.1 886.5,905.0 890.5,904.9 894.5,904.7 898.5,904.6 902.5,904.5 906.5,904.4 910.5,904.2 914.5,904.1 918.5,904.0 922.5,903.8 926.5,903.7 930.5,903.5 934.5,903.3 938.5,903.2 942.5,903.0 946.5,902.8 950.5,902.6 954.5,902.4 958.5,902.2 962.5,902.0 966.5,901.7 970.5,901.5 974.5,901.3 978.5,901.0 982.5,900.7 986.5,900.5 990.5,900.2 994.5,899.9 998.5,899.6 1002.5,899.3 1006.5,899.0 1010.5,898.7 1014.5,898.3 1018.5,898.0 1022.5,897.6 1026.5,897.2 1030.5,896.8 1034.5,896.4 1038.5,896.0 1042.5,895.6 1046.5,895.2 1050.5,894.7 1054.5,894.3 1058.5,893.8 1062.5,893.4 1066.5,892.9 1070.5,892.4 1074.5,891.9 1078.5,891.4 1082.5,890.9 1086.5,890.4 1090.5,889.9 1094.5,889.3 1098.5,888.8 1102.5,888.3 1106.5,887.8 1110.5,887.2 1114.5,886.7 1118.5,886.2 1122.5,885.6 1126.5,885.1 1130.5,884.5 1134.5,884.0 1138.5,883.5 1142.5,882.9 1146.5,882.4 1150.5,881.9 1154.5,881.4 1158.5,880.8 1162.5,880.3 1166.5,879.8 1170.5,879.3 1174.5,878.8 1178.5,878.3 1182.5,877.8 1186.5,877.4 1190.5,876.9 1194.5,876.4 1198.5,876.0 1202.5,875.5 1206.5,875.1 1210.5,874.7 1214.5,874.3 1218.5,873.9 1222.5,873.5 1226.5,873.2 1230.5,872.8 1234.5,872.5 1238.5,872.1 1242.5,871.8 1246.5,871.5 1250.5,871.3 1254.5,871.0 1258.5,870.8 1262.5,870.5 1266.5,870.3 1270.5,870.1 1274.5,870.0 1278.5,869.8 1282.5,869.7 1286.5,869.6 1290.5,869.5 1294.5,869.4 1298.5,869.3 1302.5,869.2 1306.5,869.2 1310.5,869.2 1314.5,869.2 1318.5,869.2 1322.5,869.2 1326.5,869.2 1330.5,869.3 1334.5,869.3 1338.5,869.4 1342.5,869.5 1346.5,869.6 1350.5,869.7 1354.5,869.9 1358.5,870.0 1362.5,870.2 1366.5,870.3 1370.5,870.5 1374.5,870.7 1378.5,870.9 1382.5,871.2 1386.5,871.4 1390.5,871.6 1394.5,871.9 1398.5,872.2 1402.5,872.5 1406.5,872.8 1410.5,873.1 1414.5,873.4 1418.5,873.7 1422.5,874.1 1426.5,874.4 1430.5,874.8 1434.5,875.1 1438.5,875.5 1442.5,875.9 1446.5,876.3 1450.5,876.7 1454.5,877.1 1458.5,877.6 1462.5,878.0 1466.5,878.4 1470.5,878.9 1474.5,879.4 1475.5,879.5" fill="none" stroke="#3f8f98" stroke-width="1.1" stroke-opacity="1"/><polyline points="594.5,937.7 598.5,937.6 602.5,937.6 606.5,937.5 610.5,937.4 614.5,937.4 618.5,937.3 622.5,937.3 626.5,937.2 630.5,937.2 634.5,937.2 638.5,937.1 642.5,937.1 646.5,937.1 650.5,937.1 654.5,937.1 658.5,937.1 662.5,937.2 666.5,937.2 670.5,937.2 674.5,937.2 678.5,937.3 682.5,937.3 686.5,937.4 690.5,937.4 694.5,937.5 698.5,937.6 702.5,937.6 706.5,937.7 710.5,937.8 714.5,937.9 718.5,938.0 722.5,938.1 726.5,938.2 730.5,938.3 734.5,938.4 738.5,938.5 742.5,938.6 746.5,938.7 750.5,938.8 754.5,939.0 758.5,939.1 762.5,939.2 766.5,939.4 770.5,939.5 774.5,939.7 778.5,939.8 782.5,940.0 786.5,940.1 790.5,940.3 794.5,940.5 798.5,940.6 802.5,940.8 806.5,941.0 810.5,941.1 814.5,941.3 818.5,941.5 822.5,941.7 826.5,941.9 830.5,942.0 834.5,942.2 838.5,942.4 842.5,942.6 846.5,942.8 850.5,943.0 854.5,943.2 858.5,943.4 862.5,943.6 866.5,943.7 870.5,943.9 874.5,944.1 878.5,944.3 882.5,944.5 886.5,944.7 890.5,944.9 894.5,945.1 898.5,945.2 902.5,945.4 906.5,945.6 910.5,945.8 914.5,945.9 918.5,946.1 922.5,946.3 926.5,946.4 930.5,946.6 934.5,946.7 938.5,946.9 942.5,947.0 946.5,947.1 950.5,947.3 954.5,947.4 958.5,947.5 962.5,947.6 966.5,947.7 970.5,947.8 974.5,947.9 978.5,948.0 982.5,948.1 986.5,948.2 990.5,948.2 994.5,948.3 998.5,948.4 1002.5,948.4 1006.5,948.4 1010.5,948.5 1014.5,948.5 1018.5,948.5 1022.5,948.5 1026.5,948.5 1030.5,948.4 1034.5,948.4 1038.5,948.4 1042.5,948.3 1046.5,948.3 1050.5,948.2 1054.5,948.1 1058.5,948.0 1062.5,947.9 1066.5,947.8 1070.5,947.7 1074.5,947.6 1078.5,947.5 1082.5,947.3 1086.5,947.2 1090.5,947.0 1094.5,946.9 1098.5,946.7 1102.5,946.6 1106.5,946.4 1110.5,946.3 1114.5,946.1 1118.5,945.9 1122.5,945.7 1126.5,945.6 1130.5,945.4 1134.5,945.2 1138.5,945.0 1142.5,944.8 1146.5,944.6 1150.5,944.5 1154.5,944.3 1158.5,944.1 1162.5,943.9 1166.5,943.7 1170.5,943.5 1174.5,943.4 1178.5,943.2 1182.5,943.0 1186.5,942.8 1190.5,942.7 1194.5,942.5 1198.5,942.4 1202.5,942.2 1206.5,942.0 1210.5,941.9 1214.5,941.8 1218.5,941.6 1222.5,941.5 1226.5,941.4 1230.5,941.3 1234.5,941.2 1238.5,941.1 1242.5,941.0 1246.5,940.9 1250.5,940.8 1254.5,940.8 1258.5,940.7 1262.5,940.7 1266.5,940.6 1270.5,940.6 1274.5,940.6 1278.5,940.6 1282.5,940.6 1286.5,940.6 1290.5,940.6 1294.5,940.6 1298.5,940.7 1302.5,940.7 1306.5,940.8 1310.5,940.9 1314.5,940.9 1318.5,941.0 1322.5,941.1 1326.5,941.2 1330.5,941.3 1334.5,941.4 1338.5,941.6 1342.5,941.7 1346.5,941.9 1350.5,942.0 1354.5,942.2 1358.5,942.3 1362.5,942.5 1366.5,942.7 1370.5,942.9 1374.5,943.1 1378.5,943.3 1382.5,943.5 1386.5,943.8 1390.5,944.0 1394.5,944.2 1398.5,944.5 1402.5,944.7 1406.5,945.0 1410.5,945.3 1414.5,945.6 1418.5,945.8 1422.5,946.1 1426.5,946.4 1430.5,946.8 1434.5,947.1 1438.5,947.4 1442.5,947.7 1446.5,948.1 1450.5,948.4 1454.5,948.8 1458.5,949.1 1462.5,949.5 1466.5,949.9 1470.5,950.3 1474.5,950.6 1475.5,950.7" fill="none" stroke="#6fa068" stroke-width="1.1" stroke-opacity="1"/><polyline points="594.5,975.0 598.5,975.0 602.5,975.0 606.5,974.9 610.5,974.9 614.5,974.9 618.5,974.9 622.5,974.8 626.5,974.8 630.5,974.8 634.5,974.8 638.5,974.7 642.5,974.7 646.5,974.7 650.5,974.7 654.5,974.6 658.5,974.6 662.5,974.6 666.5,974.6 670.5,974.5 674.5,974.5 678.5,974.5 682.5,974.5 686.5,974.4 690.5,974.4 694.5,974.4 698.5,974.4 702.5,974.3 706.5,974.3 710.5,974.3 714.5,974.3 718.5,974.3 722.5,974.2 726.5,974.2 730.5,974.2 734.5,974.2 738.5,974.1 742.5,974.1 746.5,974.1 750.5,974.1 754.5,974.1 758.5,974.0 762.5,974.0 766.5,974.0 770.5,974.0 774.5,974.0 778.5,973.9 782.5,973.9 786.5,973.9 790.5,973.9 794.5,973.9 798.5,973.9 802.5,973.8 806.5,973.8 810.5,973.8 814.5,973.8 818.5,973.8 822.5,973.8 826.5,973.8 830.5,973.8 834.5,973.7 838.5,973.7 842.5,973.7 846.5,973.7 850.5,973.7 854.5,973.7 858.5,973.7 862.5,973.7 866.5,973.7 870.5,973.7 874.5,973.7 878.5,973.7 882.5,973.7 886.5,973.7 890.5,973.7 894.5,973.7 898.5,973.7 902.5,973.7 906.5,973.7 910.5,973.6 914.5,973.6 918.5,973.6 922.5,973.6 926.5,973.6 930.5,973.6 934.5,973.6 938.5,973.6 942.5,973.6 946.5,973.6 950.5,973.6 954.5,973.6 958.5,973.6 962.5,973.6 966.5,973.6 970.5,973.6 974.5,973.6 978.5,973.6 982.5,973.6 986.5,973.6 990.5,973.6 994.5,973.6 998.5,973.6 1002.5,973.6 1006.5,973.6 1010.5,973.6 1014.5,973.6 1018.5,973.6 1022.5,973.6 1026.5,973.6 1030.5,973.6 1034.5,973.6 1038.5,973.6 1042.5,973.6 1046.5,973.6 1050.5,973.6 1054.5,973.6 1058.5,973.6 1062.5,973.6 1066.5,973.6 1070.5,973.6 1074.5,973.5 1078.5,973.5 1082.5,973.5 1086.5,973.5 1090.5,973.5 1094.5,973.5 1098.5,973.5 1102.5,973.5 1106.5,973.5 1110.5,973.5 1114.5,973.5 1118.5,973.5 1122.5,973.5 1126.5,973.5 1130.5,973.5 1134.5,973.5 1138.5,973.5 1142.5,973.4 1146.5,973.4 1150.5,973.4 1154.5,973.4 1158.5,973.4 1162.5,973.4 1166.5,973.4 1170.5,973.4 1174.5,973.4 1178.5,973.4 1182.5,973.4 1186.5,973.4 1190.5,973.4 1194.5,973.4 1198.5,973.4 1202.5,973.4 1206.5,973.4 1210.5,973.3 1214.5,973.3 1218.5,973.3 1222.5,973.3 1226.5,973.3 1230.5,973.3 1234.5,973.3 1238.5,973.3 1242.5,973.3 1246.5,973.3 1250.5,973.3 1254.5,973.3 1258.5,973.3 1262.5,973.3 1266.5,973.3 1270.5,973.3 1274.5,973.3 1278.5,973.3 1282.5,973.3 1286.5,973.3 1290.5,973.3 1294.5,973.3 1298.5,973.3 1302.5,973.3 1306.5,973.3 1310.5,973.3 1314.5,973.3 1318.5,973.3 1322.5,973.3 1326.5,973.3 1330.5,973.3 1334.5,973.2 1338.5,973.2 1342.5,973.2 1346.5,973.2 1350.5,973.2 1354.5,973.2 1358.5,973.2 1362.5,973.2 1366.5,973.2 1370.5,973.2 1374.5,973.2 1378.5,973.2 1382.5,973.2 1386.5,973.2 1390.5,973.2 1394.5,973.2 1398.5,973.2 1402.5,973.2 1406.5,973.2 1410.5,973.2 1414.5,973.2 1418.5,973.2 1422.5,973.2 1426.5,973.2 1430.5,973.2 1434.5,973.2 1438.5,973.2 1442.5,973.2 1446.5,973.2 1450.5,973.2 1454.5,973.2 1458.5,973.2 1462.5,973.2 1466.5,973.2 1470.5,973.2 1474.5,973.2 1475.5,973.2" fill="none" stroke="#c8902e" stroke-width="1.1" stroke-opacity="1"/><line x1="595" y1="451.5" x2="1476" y2="451.5" stroke="#000" stroke-opacity="0.035" stroke-width="1"/><line x1="595" y1="720.5" x2="1476" y2="720.5" stroke="#000" stroke-opacity="0.035" stroke-width="1"/><line x1="814.5" y1="182" x2="814.5" y2="989.6" stroke="#000" stroke-opacity="0.025" stroke-width="1"/><line x1="1034.5" y1="182" x2="1034.5" y2="989.6" stroke="#000" stroke-opacity="0.025" stroke-width="1"/><line x1="1255.5" y1="182" x2="1255.5" y2="989.6" stroke="#000" stroke-opacity="0.025" stroke-width="1"/><line x1="594.5" y1="182" x2="594.5" y2="990.0" stroke="#111" stroke-width="1.3"/></svg><!--/CHART-->
<div class="a" style="left:1476px;top:150px;width:20px;height:845px;background:#fff"></div>
<div class="t" style="left:501px;top:175.5px;width:90.5px;text-align:right;font-size:12px;letter-spacing:1.0px;color:#3a4866">15000 min</div>
<div class="t" style="left:501px;top:444.5px;width:90.5px;text-align:right;font-size:12px;letter-spacing:1.0px;color:#3a4866">10000 min</div>
<div class="t" style="left:501px;top:713.5px;width:90.5px;text-align:right;font-size:12px;letter-spacing:1.0px;color:#3a4866">5000 min</div>
<div class="t" style="left:501px;top:982.5px;width:90.5px;text-align:right;font-size:12px;letter-spacing:1.0px;color:#3a4866">0 min</div>
<div class="t" style="left:594px;top:991.5px;font-size:12px;letter-spacing:0.65px;color:#3a4866">02.07 17:00</div>
<div class="t" style="left:784px;top:991px;width:60px;text-align:center;font-size:12px;color:#3a4866">17:15</div>
<div class="t" style="left:1004px;top:991px;width:60px;text-align:center;font-size:12px;color:#3a4866">17:30</div>
<div class="t" style="left:1225px;top:991px;width:60px;text-align:center;font-size:12px;color:#3a4866">17:45</div>
<div class="a" style="left:1441px;top:991px;width:55px;height:16px;overflow:hidden"><div class="t" style="left:0;top:0.5px;font-size:12px;letter-spacing:0.4px;color:#3a4866">02.07 18:00</div></div>
<div class="hl" style="left:515px;top:1029px;width:981px"></div>
<div class="t" style="left:523.5px;top:1037.5px;font-size:13.2px;letter-spacing:0.9px">1-5 of 5</div>
<svg style="left:788.7px;top:1043.3px" width="16.6" height="7.8"><path d="M7.2 0.9L1.1 3.8L7.2 6.7 M15.6 0.9L9.5 3.8L15.6 6.7" fill="none" stroke="#3d7fdb" stroke-width="2" stroke-linejoin="miter"/></svg>
<svg style="left:833.2px;top:1043.3px" width="8.2" height="7.8"><path d="M7.2 0.9L1.1 3.8L7.2 6.7" fill="none" stroke="#3d7fdb" stroke-width="2" stroke-linejoin="miter"/></svg>
<div class="a" style="left:861px;top:1032px;width:32px;height:28px;border-radius:3px;background:#3a82d8"></div>
<div class="t" style="left:861px;top:1038px;width:32px;text-align:center;font-size:14px;font-weight:bold;-webkit-text-stroke:0;color:#fff">1</div>
<svg style="left:912.8px;top:1043.3px" width="8.2" height="7.8"><path d="M0.0 0.9L6.1 3.8L0.0 6.7" fill="none" stroke="#3d7fdb" stroke-width="2" stroke-linejoin="miter"/></svg>
<svg style="left:948.3px;top:1043.3px" width="16.6" height="7.8"><path d="M0.0 0.9L6.1 3.8L0.0 6.7 M8.4 0.9L14.5 3.8L8.4 6.7" fill="none" stroke="#3d7fdb" stroke-width="2" stroke-linejoin="miter"/></svg>
<svg style="left:1260px;top:1039px" width="14" height="14" viewBox="0 0 14 14"><path d="M7 1.2L8.3 1.5L8.8 3L10.3 2.4L11.4 3.3L11 4.8L12.4 5.6L12.6 7L12.4 8.4L11 9.2L11.4 10.7L10.3 11.6L8.8 11L8.3 12.5L7 12.8L5.7 12.5L5.2 11L3.7 11.6L2.6 10.7L3 9.2L1.6 8.4L1.4 7L1.6 5.6L3 4.8L2.6 3.3L3.7 2.4L5.2 3L5.7 1.5Z" fill="none" stroke="#2d3a55" stroke-width="1.2" stroke-linejoin="round"/><circle cx="7" cy="7" r="2.2" fill="none" stroke="#2d3a55" stroke-width="1.2"/></svg>
<svg style="left:1319px;top:1038px" width="17" height="16" viewBox="0 0 17 16"><path d="M9.5 5V2.5L7.5 0.8H1.5V14.5H9.5V11" fill="none" stroke="#2d3a55" stroke-width="1.3" stroke-linejoin="round"/><path d="M5.5 8H15M12.5 5.5L15.2 8L12.5 10.5" fill="none" stroke="#2d3a55" stroke-width="1.3"/></svg>
<div class="t" style="left:1343px;top:1037px;font-size:14px;font-weight:bold;-webkit-text-stroke:0;letter-spacing:0.2px">Export</div>
<div class="a" style="left:1418px;top:1032px;width:76px;height:28px;border:1px solid #e3e8f0"></div>
<div class="t" style="left:1426.5px;top:1037.5px;font-size:13.2px;letter-spacing:1.45px">2 000</div>
<svg style="left:1472px;top:1039px" width="11" height="14" viewBox="0 0 11 14"><path d="M5.5 1V12.5M1 8L5.5 12.5L10 8" fill="none" stroke="#2d3a55" stroke-width="1.3"/></svg>
<!-- splitters -->
<svg style="left:509px;top:581px" width="3" height="24" fill="#a9b8cc"><rect x="0" y="0" width="1" height="1"/><rect x="0" y="2" width="1" height="1"/><rect x="0" y="4" width="1" height="1"/><rect x="0" y="6" width="1" height="1"/><rect x="0" y="8" width="1" height="1"/><rect x="0" y="10" width="1" height="1"/><rect x="0" y="12" width="1" height="1"/><rect x="0" y="14" width="1" height="1"/><rect x="0" y="16" width="1" height="1"/><rect x="0" y="18" width="1" height="1"/><rect x="0" y="20" width="1" height="1"/><rect x="0" y="22" width="1" height="1"/><rect x="2" y="0" width="1" height="1"/><rect x="2" y="2" width="1" height="1"/><rect x="2" y="4" width="1" height="1"/><rect x="2" y="6" width="1" height="1"/><rect x="2" y="8" width="1" height="1"/><rect x="2" y="10" width="1" height="1"/><rect x="2" y="12" width="1" height="1"/><rect x="2" y="14" width="1" height="1"/><rect x="2" y="16" width="1" height="1"/><rect x="2" y="18" width="1" height="1"/><rect x="2" y="20" width="1" height="1"/><rect x="2" y="22" width="1" height="1"/></svg>
<svg style="left:1499px;top:581px" width="3" height="24" fill="#a9b8cc"><rect x="0" y="0" width="1" height="1"/><rect x="0" y="2" width="1" height="1"/><rect x="0" y="4" width="1" height="1"/><rect x="0" y="6" width="1" height="1"/><rect x="0" y="8" width="1" height="1"/><rect x="0" y="10" width="1" height="1"/><rect x="0" y="12" width="1" height="1"/><rect x="0" y="14" width="1" height="1"/><rect x="0" y="16" width="1" height="1"/><rect x="0" y="18" width="1" height="1"/><rect x="0" y="20" width="1" height="1"/><rect x="0" y="22" width="1" height="1"/><rect x="2" y="0" width="1" height="1"/><rect x="2" y="2" width="1" height="1"/><rect x="2" y="4" width="1" height="1"/><rect x="2" y="6" width="1" height="1"/><rect x="2" y="8" width="1" height="1"/><rect x="2" y="10" width="1" height="1"/><rect x="2" y="12" width="1" height="1"/><rect x="2" y="14" width="1" height="1"/><rect x="2" y="16" width="1" height="1"/><rect x="2" y="18" width="1" height="1"/><rect x="2" y="20" width="1" height="1"/><rect x="2" y="22" width="1" height="1"/></svg>
<!-- RIGHT PANEL -->
<div class="vl" style="left:1504px;top:122px;height:940px"></div>
<div class="a" style="left:1505px;top:122px;width:399px;height:24px;background:#fdfdfe"></div>
<div class="hl" style="left:1505px;top:146px;width:399px"></div>
<svg style="left:1513px;top:127px" width="14" height="12" viewBox="0 0 14 12"><g fill="#3f7fdc"><rect x="0" y="0.5" width="2.2" height="2.2" rx="0.5"/><rect x="0" y="4.9" width="2.2" height="2.2" rx="0.5"/><rect x="0" y="9.3" width="2.2" height="2.2" rx="0.5"/></g><path d="M4.5 1.6H13M4.5 6H13M4.5 10.4H13" stroke="#3f7fdc" stroke-width="1.3"/></svg>
<div class="t" style="left:1536.5px;top:125.5px;font-size:13.2px;letter-spacing:1.37px;color:#3d7fdb">Reports</div>
<div class="a" style="left:1505px;top:147px;width:399px;height:40px;background:#fdfdfe;border-bottom:1px solid #e6ebf3"></div>
<svg style="left:1513px;top:160px" width="12" height="12" viewBox="0 0 12 12"><rect x="0.6" y="0.6" width="10.8" height="10.8" rx="1.5" fill="none" stroke="#2d3a55" stroke-width="1.2"/><path d="M3.2 6H8.8M6 3.2V8.8" stroke="#2d3a55" stroke-width="1.2"/></svg>
<svg style="left:1534px;top:160px" width="14" height="12" viewBox="0 0 14 12"><path d="M0.7 1.8A1 1 0 0 1 1.7 0.8H5L6.5 2.5H12.3A1 1 0 0 1 13.3 3.5V10.3A1 1 0 0 1 12.3 11.3H1.7A1 1 0 0 1 0.7 10.3Z" fill="none" stroke="#2d3a55" stroke-width="1.2" stroke-linejoin="round"/></svg>
<div class="t" style="left:1557px;top:159px;font-size:13.2px;letter-spacing:1.34px;-webkit-text-stroke:0.22px">Traffic speed</div>
<div class="a" style="left:1505px;top:187px;width:399px;height:40px;background:#fdfdfe;border-bottom:1px solid #e6ebf3"></div>
<svg style="left:1513px;top:200px" width="12" height="12" viewBox="0 0 12 12"><rect x="0.6" y="0.6" width="10.8" height="10.8" rx="1.5" fill="none" stroke="#2d3a55" stroke-width="1.2"/><path d="M3.2 6H8.8M6 3.2V8.8" stroke="#2d3a55" stroke-width="1.2"/></svg>
<svg style="left:1534px;top:200px" width="14" height="12" viewBox="0 0 14 12"><path d="M0.7 1.8A1 1 0 0 1 1.7 0.8H5L6.5 2.5H12.3A1 1 0 0 1 13.3 3.5V10.3A1 1 0 0 1 12.3 11.3H1.7A1 1 0 0 1 0.7 10.3Z" fill="none" stroke="#2d3a55" stroke-width="1.2" stroke-linejoin="round"/></svg>
<div class="t" style="left:1557px;top:199px;font-size:13.2px;letter-spacing:1.25px;-webkit-text-stroke:0.22px">Top</div>
<div class="a" style="left:1505px;top:227px;width:399px;height:40px;background:#fdfdfe;border-bottom:1px solid #e6ebf3"></div>
<svg style="left:1513px;top:240px" width="12" height="12" viewBox="0 0 12 12"><rect x="0.6" y="0.6" width="10.8" height="10.8" rx="1.5" fill="none" stroke="#2d3a55" stroke-width="1.2"/><path d="M3.2 6H8.8M6 3.2V8.8" stroke="#2d3a55" stroke-width="1.2"/></svg>
<svg style="left:1534px;top:240px" width="14" height="12" viewBox="0 0 14 12"><path d="M0.7 1.8A1 1 0 0 1 1.7 0.8H5L6.5 2.5H12.3A1 1 0 0 1 13.3 3.5V10.3A1 1 0 0 1 12.3 11.3H1.7A1 1 0 0 1 0.7 10.3Z" fill="none" stroke="#2d3a55" stroke-width="1.2" stroke-linejoin="round"/></svg>
<div class="t" style="left:1557px;top:239px;font-size:13.2px;letter-spacing:-0.8px;-webkit-text-stroke:0.22px">RTT</div>
<div class="a" style="left:1505px;top:267px;width:399px;height:40px;background:#fdfdfe;border-bottom:1px solid #e6ebf3"></div>
<svg style="left:1513px;top:280px" width="12" height="12" viewBox="0 0 12 12"><rect x="0.6" y="0.6" width="10.8" height="10.8" rx="1.5" fill="none" stroke="#2d3a55" stroke-width="1.2"/><path d="M3.2 6H8.8" stroke="#2d3a55" stroke-width="1.2"/></svg>
<svg style="left:1534px;top:280px" width="15" height="12" viewBox="0 0 15 12"><path d="M0.7 10.5V1.8A1 1 0 0 1 1.7 0.8H5L6.5 2.5H11.5V4.5" fill="none" stroke="#2d3a55" stroke-width="1.2" stroke-linejoin="round"/><path d="M0.7 11.3L3.2 5H14.5L12 11.3Z" fill="#2d3a55"/></svg>
<div class="t" style="left:1557px;top:279px;font-size:13.2px;letter-spacing:-0.1px;-webkit-text-stroke:0.22px">VOIP</div>
<div class="a" style="left:1505px;top:307px;width:399px;height:40px;background:#fdfdfe;border-bottom:1px solid #e6ebf3"></div>
<svg style="left:1554px;top:319px" width="12" height="14" viewBox="0 0 12 14"><path d="M1.2 1.8A1 1 0 0 1 2.2 0.8H7.2L10.8 4.4V12.2A1 1 0 0 1 9.8 13.2H2.2A1 1 0 0 1 1.2 12.2Z" fill="none" stroke="#2d3a55" stroke-width="1.2" stroke-linejoin="round"/><path d="M7.2 0.8V4.4H10.8" fill="none" stroke="#2d3a55" stroke-width="1"/></svg>
<div class="t" style="left:1577px;top:319px;font-size:13.2px;letter-spacing:1.24px;-webkit-text-stroke:0.22px">Top protocols</div>
<div class="a" style="left:1505px;top:347px;width:399px;height:40px;background:#fdfdfe;border-bottom:1px solid #e6ebf3"></div>
<svg style="left:1554px;top:359px" width="12" height="14" viewBox="0 0 12 14"><path d="M1.2 1.8A1 1 0 0 1 2.2 0.8H7.2L10.8 4.4V12.2A1 1 0 0 1 9.8 13.2H2.2A1 1 0 0 1 1.2 12.2Z" fill="none" stroke="#2d3a55" stroke-width="1.2" stroke-linejoin="round"/><path d="M7.2 0.8V4.4H10.8" fill="none" stroke="#2d3a55" stroke-width="1"/></svg>
<div class="t" style="left:1577px;top:359px;font-size:13.2px;letter-spacing:1.02px;-webkit-text-stroke:0.22px">Top protocols (Maxi)</div>
<div class="a" style="left:1505px;top:387px;width:399px;height:40px;background:#fdfdfe;border-bottom:1px solid #e6ebf3"></div>
<svg style="left:1554px;top:399px" width="12" height="14" viewBox="0 0 12 14"><path d="M1.2 1.8A1 1 0 0 1 2.2 0.8H7.2L10.8 4.4V12.2A1 1 0 0 1 9.8 13.2H2.2A1 1 0 0 1 1.2 12.2Z" fill="none" stroke="#2d3a55" stroke-width="1.2" stroke-linejoin="round"/><path d="M7.2 0.8V4.4H10.8" fill="none" stroke="#2d3a55" stroke-width="1"/></svg>
<div class="t" style="left:1577px;top:399px;font-size:13.2px;letter-spacing:1.09px;-webkit-text-stroke:0.22px">Users by protocols</div>
<div class="a" style="left:1505px;top:427px;width:399px;height:40px;background:#fdfdfe;border-bottom:1px solid #e6ebf3"></div>
<svg style="left:1554px;top:439px" width="12" height="14" viewBox="0 0 12 14"><path d="M1.2 1.8A1 1 0 0 1 2.2 0.8H7.2L10.8 4.4V12.2A1 1 0 0 1 9.8 13.2H2.2A1 1 0 0 1 1.2 12.2Z" fill="none" stroke="#2d3a55" stroke-width="1.2" stroke-linejoin="round"/><path d="M7.2 0.8V4.4H10.8" fill="none" stroke="#2d3a55" stroke-width="1"/></svg>
<div class="t" style="left:1577px;top:439px;font-size:13.2px;letter-spacing:1.08px;-webkit-text-stroke:0.22px">Calls by protocols</div>
<div class="a" style="left:1505px;top:467px;width:399px;height:40px;background:#f3f4f8;border-bottom:1px solid #e6ebf3"></div>
<svg style="left:1554px;top:479px" width="12" height="14" viewBox="0 0 12 14"><path d="M1.2 1.8A1 1 0 0 1 2.2 0.8H7.2L10.8 4.4V12.2A1 1 0 0 1 9.8 13.2H2.2A1 1 0 0 1 1.2 12.2Z" fill="none" stroke="#2d3a55" stroke-width="1.2" stroke-linejoin="round"/><path d="M7.2 0.8V4.4H10.8" fill="none" stroke="#2d3a55" stroke-width="1"/></svg>
<div class="t" style="left:1577px;top:479px;font-size:13.2px;letter-spacing:1.13px;-webkit-text-stroke:0.22px">Minutes by protocols</div>
<div class="a" style="left:1505px;top:507px;width:399px;height:40px;background:#fdfdfe;border-bottom:1px solid #e6ebf3"></div>
<svg style="left:1554px;top:519px" width="12" height="14" viewBox="0 0 12 14"><path d="M1.2 1.8A1 1 0 0 1 2.2 0.8H7.2L10.8 4.4V12.2A1 1 0 0 1 9.8 13.2H2.2A1 1 0 0 1 1.2 12.2Z" fill="none" stroke="#2d3a55" stroke-width="1.2" stroke-linejoin="round"/><path d="M7.2 0.8V4.4H10.8" fill="none" stroke="#2d3a55" stroke-width="1"/></svg>
<div class="t" style="left:1577px;top:519px;font-size:13.2px;letter-spacing:1.27px;-webkit-text-stroke:0.22px">Traffic by protocols</div>
<!-- floating button -->
<div class="a" style="left:1876px;top:1036px;width:24px;height:24px;border-radius:50%;background:#fff;box-shadow:0 2px 5px rgba(40,50,70,.22)"></div>
<svg style="left:1881px;top:1041px" width="14" height="14" viewBox="0 0 14 14"><path d="M3.5 1.3H9.5M2.3 3.5H10.5" stroke="#c3c8d5" stroke-width="1"/><rect x="0.9" y="5.5" width="12.2" height="8" rx="1.3" fill="#fff" stroke="#c3c8d5" stroke-width="1.3"/></svg>
<div class="a" style="left:1890px;top:1036px;width:12px;height:12px;border-radius:50%;background:#d9e9fd"></div>
<div class="t" style="left:1890px;top:1036px;width:12px;text-align:center;font-size:9px;line-height:12px;color:#3b7ddd;-webkit-text-stroke:0.15px #3b7ddd">51</div>
</body></html>
